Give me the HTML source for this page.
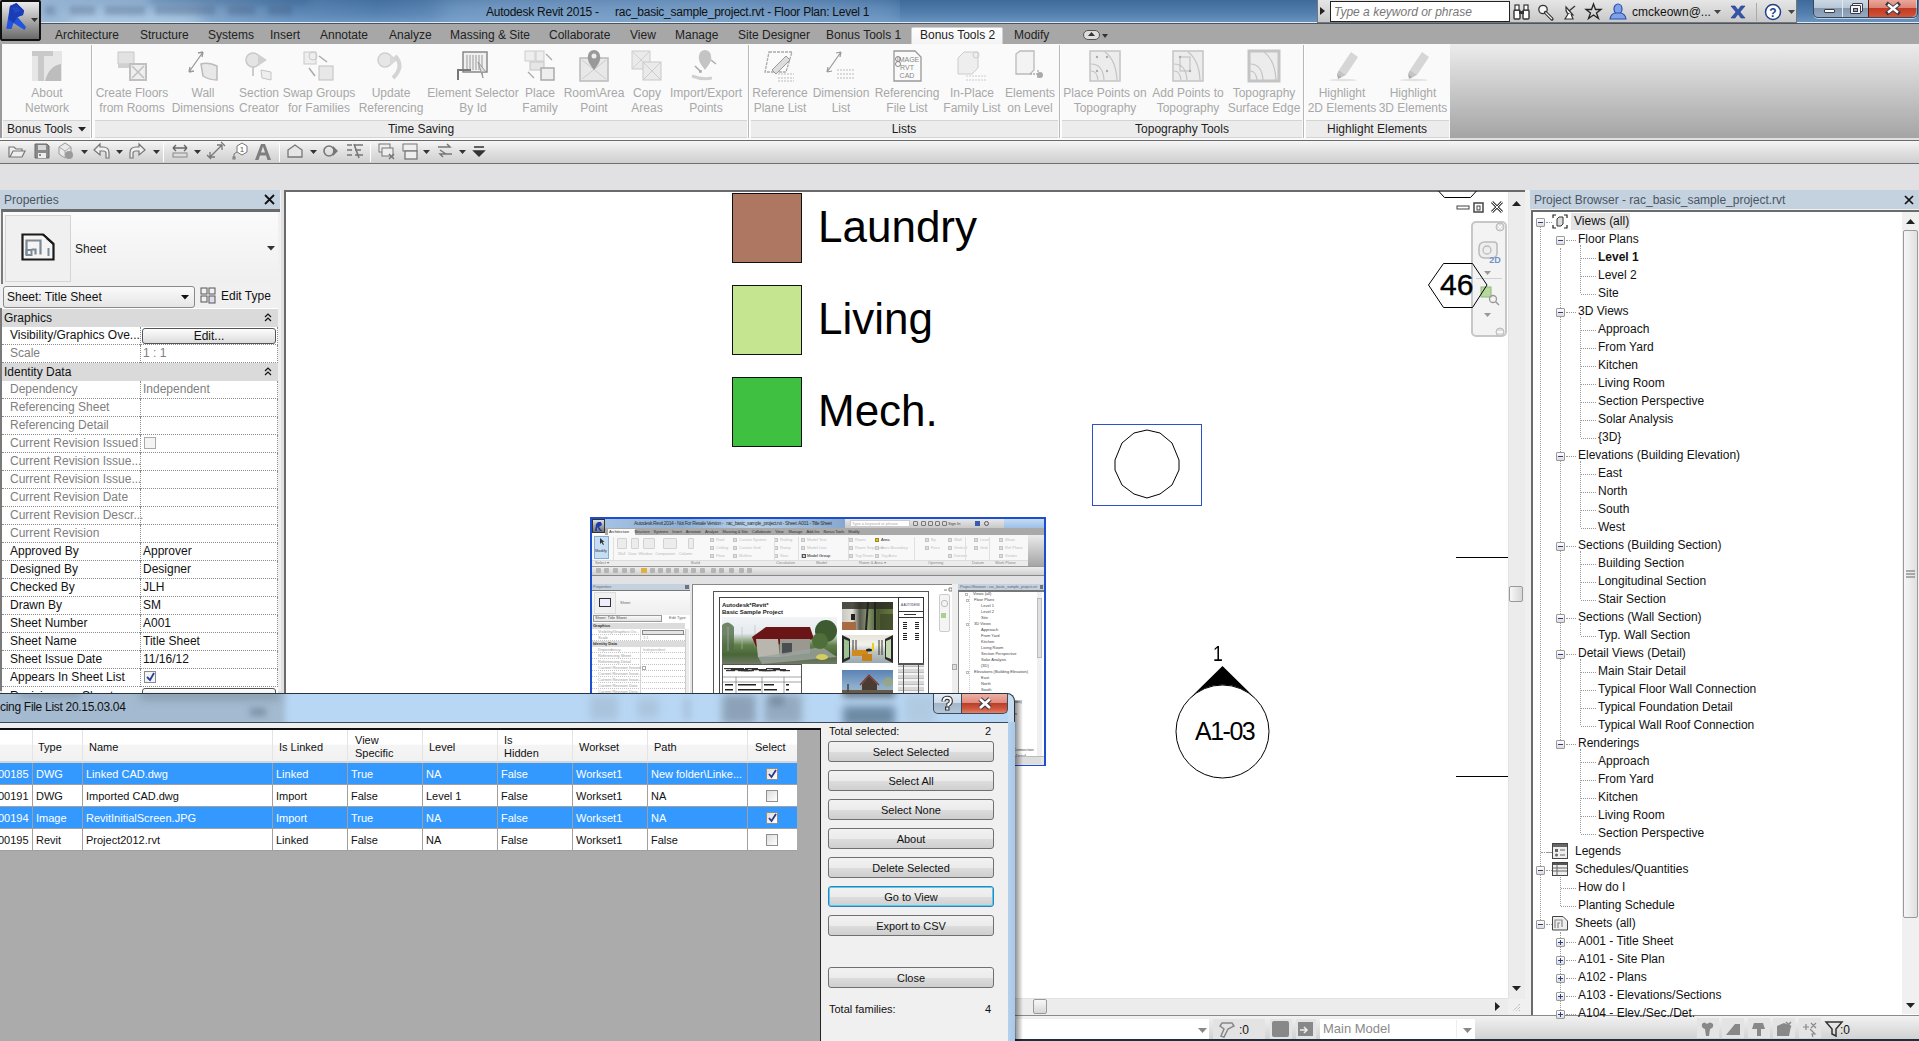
<!DOCTYPE html><html><head><meta charset="utf-8"><style>
*{margin:0;padding:0;box-sizing:border-box}
html,body{width:1919px;height:1041px;overflow:hidden;background:#e1e1e3;font-family:"Liberation Sans",sans-serif;font-size:12px;color:#000}
.a{position:absolute}
.t{position:absolute;white-space:nowrap;line-height:14px}
svg{position:absolute;overflow:visible}
</style></head><body><div class="a" style="left:0px;top:0px;width:1919px;height:23px;background:linear-gradient(#3f6a9b,#5380b0 60%,#6d96c0)"></div>
<div class="a" style="left:0px;top:0px;width:900px;height:23px;background:linear-gradient(90deg,rgba(170,195,222,0.85) 0%,rgba(160,190,220,0.75) 18%,rgba(120,160,200,0.35) 32%,rgba(110,150,195,0.1) 42%,rgba(140,175,210,0.35) 55%,rgba(140,175,210,0.4) 80%,rgba(110,150,195,0) 100%)"></div>
<div class="a" style="left:0;top:0;width:900px;height:22px;overflow:hidden"><div class="a" style="left:70px;top:12px;width:130px;height:16px;background:rgba(200,225,245,0.55);filter:blur(8px)"></div><div class="a" style="left:45px;top:6px;width:10px;height:9px;background:rgba(60,80,110,0.28);filter:blur(2.5px)"></div><div class="a" style="left:70px;top:6px;width:25px;height:9px;background:rgba(60,80,110,0.28);filter:blur(2.5px)"></div><div class="a" style="left:105px;top:6px;width:40px;height:9px;background:rgba(60,80,110,0.28);filter:blur(2.5px)"></div><div class="a" style="left:155px;top:6px;width:60px;height:9px;background:rgba(60,80,110,0.28);filter:blur(2.5px)"></div><div class="a" style="left:228px;top:6px;width:27px;height:9px;background:rgba(60,80,110,0.28);filter:blur(2.5px)"></div><div class="a" style="left:268px;top:6px;width:24px;height:9px;background:rgba(60,80,110,0.28);filter:blur(2.5px)"></div><div class="a" style="left:150px;top:-6px;width:160px;height:10px;background:rgba(40,80,130,0.35);filter:blur(5px)"></div><div class="a" style="left:440px;top:2px;width:460px;height:20px;background:rgba(160,195,228,0.35);filter:blur(10px)"></div></div>
<div class="a" style="left:0px;top:22px;width:1919px;height:1px;background:#dfe9f3"></div>
<div class="a" style="left:0px;top:0px;width:41px;height:41px;background:linear-gradient(#ececec,#6a6a6a);border:2px solid #111;border-radius:2px"></div>
<svg style="left:0px;top:0px;" width="40" height="40" viewBox="0 0 40 40"><path d="M10 6 L16.4 3 L24 10.5 L23 15 L17.5 17 L26 27 L24.5 30 L13.5 23 L11.5 29 L6.3 28.7 Z" fill="#2152e0"/><path d="M10 6 L16.4 3 L24 10.5 L23 15 L17.5 17 L13.5 23 L8.5 19 Z" fill="#1a3db5"/><path d="M12 8 L17 7 L21 11 L15 13Z" fill="#2a4fc8" opacity="0.7"/></svg>
<svg style="left:31px;top:18px;" width="7" height="4" viewBox="0 0 7 4"><path d="M0 0 L7 0 L3.5 4 Z" fill="#333"/></svg>
<div class="t" style="left:486px;top:5px;font-size:12px;letter-spacing:-0.25px;color:#111">Autodesk Revit 2015 -</div>
<div class="t" style="left:615px;top:5px;font-size:12px;letter-spacing:-0.25px;color:#111">rac_basic_sample_project.rvt - Floor Plan: Level 1</div>
<div class="a" style="left:1317px;top:0px;width:480px;height:23px;background:linear-gradient(#e6e6e6,#c8c8c8);border:1px solid #777;border-top:none"></div>
<svg style="left:1320px;top:7px;" width="6" height="8" viewBox="0 0 6 8"><path d="M0 0 L5 4 L0 8Z" fill="#222"/></svg>
<div class="a" style="left:1330px;top:1px;width:180px;height:21px;background:#fff;border:1px solid #222"></div>
<div class="t" style="left:1334px;top:5px;font-style:italic;color:#777;font-size:12px">Type a keyword or phrase</div>
<svg style="left:1513px;top:4px;" width="17" height="16" viewBox="0 0 17 16"><rect x="1" y="6" width="6" height="9" rx="1" fill="#fff" stroke="#333" stroke-width="1.4"/><rect x="10" y="6" width="6" height="9" rx="1" fill="#fff" stroke="#333" stroke-width="1.4"/><rect x="2" y="1" width="4" height="5" fill="#fff" stroke="#333" stroke-width="1.2"/><rect x="11" y="1" width="4" height="5" fill="#fff" stroke="#333" stroke-width="1.2"/><rect x="6" y="7" width="5" height="3" fill="#333"/></svg>
<svg style="left:1537px;top:4px;" width="17" height="16" viewBox="0 0 17 16"><circle cx="6" cy="5.5" r="4.2" fill="#f4f4f4" stroke="#333" stroke-width="1.3"/><path d="M8.5 8.5 L15 15" stroke="#333" stroke-width="3.2" stroke-linecap="round"/><path d="M8.5 8.5 L15 15" stroke="#eee" stroke-width="1.2"/></svg>
<svg style="left:1562px;top:4px;" width="16" height="16" viewBox="0 0 16 16"><path d="M4 3 Q3 11 11 11 Z" fill="#fff" stroke="#333" stroke-width="1.2"/><path d="M7 7 L13 2" stroke="#333" stroke-width="1.3"/><path d="M6 10 L3 15 H11 L9 10" fill="#fff" stroke="#333" stroke-width="1.2"/></svg>
<svg style="left:1585px;top:3px;" width="17" height="17" viewBox="0 0 17 17"><path d="M8.5 1 L10.5 6.5 L16 6.5 L11.5 10 L13.5 15.5 L8.5 12 L3.5 15.5 L5.5 10 L1 6.5 L6.5 6.5 Z" fill="none" stroke="#222" stroke-width="1.3"/></svg>
<svg style="left:1609px;top:3px;" width="18" height="17" viewBox="0 0 18 17"><ellipse cx="9" cy="6" rx="4" ry="5" fill="#7fa3e8" stroke="#2a4fb0" stroke-width="1.2"/><path d="M1 16 Q2 10 7 10 H11 Q16 10 17 16 Z" fill="#7fa3e8" stroke="#2a4fb0" stroke-width="1.2"/></svg>
<div class="t" style="left:1632px;top:5px;font-size:12px;color:#111">cmckeown@...</div>
<svg style="left:1714px;top:10px;" width="8" height="4" viewBox="0 0 8 4"><path d="M0 0 L7 0 L3.5 4Z" fill="#444"/></svg>
<svg style="left:1730px;top:5px;" width="16" height="14" viewBox="0 0 16 14"><path d="M1 1 H5 L8 5 L11 1 H15 L10 7 L15 13 H11 L8 9 L5 13 H1 L6 7Z" fill="#3355aa" stroke="#1e3a80" stroke-width="0.6"/></svg>
<div class="a" style="left:1756px;top:3px;width:1px;height:18px;background:#aaa"></div>
<svg style="left:1764px;top:3px;" width="18" height="18" viewBox="0 0 18 18"><circle cx="9" cy="9" r="7.5" fill="#fff" stroke="#1f3f8a" stroke-width="1.5"/><text x="9" y="13.5" font-size="12" font-weight="bold" text-anchor="middle" fill="#1f3f8a" font-family="Liberation Sans">?</text></svg>
<svg style="left:1788px;top:10px;" width="8" height="4" viewBox="0 0 8 4"><path d="M0 0 L7 0 L3.5 4Z" fill="#444"/></svg>
<div class="a" style="left:1813px;top:0px;width:105px;height:18px;border:1px solid #3a4658;border-top:none;border-radius:0 0 5px 5px;background:linear-gradient(#cdd8e4 0%,#b9c7d6 45%,#8397ae 50%,#95aac0 100%);box-shadow:0 1px 0 rgba(255,255,255,0.6)"></div>
<div class="a" style="left:1842px;top:0px;width:1px;height:17px;background:#3a4658;border-right:1px solid #e0e8f0"></div>
<div class="a" style="left:1868px;top:0px;width:48px;height:17px;background:linear-gradient(#eba79a 0%,#d98576 45%,#c33a20 50%,#d0553a 100%);border-left:1px solid #5a1a10;border-radius:0 0 5px 0"></div>
<div class="a" style="left:1824px;top:9px;width:11px;height:4px;background:#fff;border:1px solid #3a3a48;border-radius:1px"></div>
<div class="a" style="left:1852px;top:3px;width:11px;height:9px;border:1px solid #3a3a48;background:#f4f4f4;border-radius:1px"></div>
<div class="a" style="left:1850px;top:5px;width:11px;height:9px;border:1px solid #3a3a48;background:#f4f4f4;border-radius:1px"></div>
<div class="a" style="left:1853px;top:8px;width:5px;height:4px;border:1px solid #3a3a48;background:#8aa"></div>
<svg style="left:1886px;top:3px;" width="14" height="11" viewBox="0 0 14 11"><path d="M2 1.5 L12 9.5 M12 1.5 L2 9.5" stroke="#3a3a48" stroke-width="4.2" stroke-linecap="square"/><path d="M2 1.5 L12 9.5 M12 1.5 L2 9.5" stroke="#fff" stroke-width="2.4"/></svg>
<div class="a" style="left:41px;top:23px;width:1878px;height:21px;background:#a7a7a7;border-top:1px solid #4a5564"></div>
<div class="a" style="left:0px;top:41px;width:41px;height:3px;background:#a7a7a7"></div>
<div class="a" style="left:911px;top:27px;width:92px;height:17px;background:linear-gradient(#fff,#f3f3f3);border:1px solid #d0d0d0;border-bottom:none;border-radius:2px 2px 0 0"></div>
<div class="t" style="left:55px;top:28px;font-size:12px;color:#222">Architecture</div>
<div class="t" style="left:140px;top:28px;font-size:12px;color:#222">Structure</div>
<div class="t" style="left:208px;top:28px;font-size:12px;color:#222">Systems</div>
<div class="t" style="left:270px;top:28px;font-size:12px;color:#222">Insert</div>
<div class="t" style="left:320px;top:28px;font-size:12px;color:#222">Annotate</div>
<div class="t" style="left:389px;top:28px;font-size:12px;color:#222">Analyze</div>
<div class="t" style="left:450px;top:28px;font-size:12px;color:#222">Massing &amp; Site</div>
<div class="t" style="left:549px;top:28px;font-size:12px;color:#222">Collaborate</div>
<div class="t" style="left:630px;top:28px;font-size:12px;color:#222">View</div>
<div class="t" style="left:675px;top:28px;font-size:12px;color:#222">Manage</div>
<div class="t" style="left:738px;top:28px;font-size:12px;color:#222">Site Designer</div>
<div class="t" style="left:826px;top:28px;font-size:12px;color:#222">Bonus Tools 1</div>
<div class="t" style="left:1014px;top:28px;font-size:12px;color:#222">Modify</div>
<div class="t" style="left:920px;top:28px;font-size:12px;color:#222">Bonus Tools 2</div>
<div class="a" style="left:1083px;top:30px;width:17px;height:10px;border:1px solid #555;border-radius:5px;background:#ddd"></div>
<svg style="left:1088px;top:32px;" width="7" height="5" viewBox="0 0 7 5"><path d="M0 4 L3.5 0 L7 4Z" fill="#333"/></svg>
<svg style="left:1102px;top:34px;" width="6" height="4" viewBox="0 0 6 4"><path d="M0 0 L6 0 L3 4Z" fill="#333"/></svg>
<div class="a" style="left:0px;top:44px;width:1450px;height:94px;background:#fafafa"></div>
<div class="a" style="left:1450px;top:44px;width:469px;height:94px;background:linear-gradient(#ececec,#a4a4a4)"></div>
<div class="a" style="left:0px;top:44px;width:2px;height:94px;background:#9a9a9a"></div>
<div class="a" style="left:3px;top:120px;width:87px;height:18px;background:#ececec;border-top:1px solid #d4d4d4;border-bottom:1px solid #d4d4d4"></div>
<div class="a" style="left:95px;top:120px;width:652px;height:18px;background:#ececec;border-top:1px solid #d4d4d4;border-bottom:1px solid #d4d4d4"></div>
<div class="t" style="left:271px;top:122px;width:300px;text-align:center;color:#1c1c1c;font-size:12px">Time Saving</div>
<div class="a" style="left:751px;top:120px;width:307px;height:18px;background:#ececec;border-top:1px solid #d4d4d4;border-bottom:1px solid #d4d4d4"></div>
<div class="t" style="left:754px;top:122px;width:300px;text-align:center;color:#1c1c1c;font-size:12px">Lists</div>
<div class="a" style="left:1062px;top:120px;width:240px;height:18px;background:#ececec;border-top:1px solid #d4d4d4;border-bottom:1px solid #d4d4d4"></div>
<div class="t" style="left:1032px;top:122px;width:300px;text-align:center;color:#1c1c1c;font-size:12px">Topography Tools</div>
<div class="a" style="left:1306px;top:120px;width:143px;height:18px;background:#ececec;border-top:1px solid #d4d4d4;border-bottom:1px solid #d4d4d4"></div>
<div class="t" style="left:1227px;top:122px;width:300px;text-align:center;color:#1c1c1c;font-size:12px">Highlight Elements</div>
<div class="t" style="left:7px;top:122px;color:#1c1c1c;font-size:12px">Bonus Tools</div>
<svg style="left:78px;top:127px;" width="9" height="5" viewBox="0 0 9 5"><path d="M0 0 L8 0 L4 4.5Z" fill="#222"/></svg>
<div class="a" style="left:91px;top:45px;width:2px;height:93px;background:#b8b8b8;border-right:1px solid #fff"></div>
<div class="a" style="left:748px;top:45px;width:2px;height:93px;background:#b8b8b8;border-right:1px solid #fff"></div>
<div class="a" style="left:1059px;top:45px;width:2px;height:93px;background:#b8b8b8;border-right:1px solid #fff"></div>
<div class="a" style="left:1303px;top:45px;width:2px;height:93px;background:#b8b8b8;border-right:1px solid #fff"></div>
<div class="t" style="left:-13px;top:86px;width:120px;text-align:center;color:#a8a8a8;font-size:12px">About</div>
<div class="t" style="left:-13px;top:101px;width:120px;text-align:center;color:#a8a8a8;font-size:12px">Network</div>
<div class="t" style="left:72px;top:86px;width:120px;text-align:center;color:#a8a8a8;font-size:12px">Create Floors</div>
<div class="t" style="left:72px;top:101px;width:120px;text-align:center;color:#a8a8a8;font-size:12px">from Rooms</div>
<div class="t" style="left:143px;top:86px;width:120px;text-align:center;color:#a8a8a8;font-size:12px">Wall</div>
<div class="t" style="left:143px;top:101px;width:120px;text-align:center;color:#a8a8a8;font-size:12px">Dimensions</div>
<div class="t" style="left:199px;top:86px;width:120px;text-align:center;color:#a8a8a8;font-size:12px">Section</div>
<div class="t" style="left:199px;top:101px;width:120px;text-align:center;color:#a8a8a8;font-size:12px">Creator</div>
<div class="t" style="left:259px;top:86px;width:120px;text-align:center;color:#a8a8a8;font-size:12px">Swap Groups</div>
<div class="t" style="left:259px;top:101px;width:120px;text-align:center;color:#a8a8a8;font-size:12px">for Families</div>
<div class="t" style="left:331px;top:86px;width:120px;text-align:center;color:#a8a8a8;font-size:12px">Update</div>
<div class="t" style="left:331px;top:101px;width:120px;text-align:center;color:#a8a8a8;font-size:12px">Referencing</div>
<div class="t" style="left:413px;top:86px;width:120px;text-align:center;color:#a8a8a8;font-size:12px">Element Selector</div>
<div class="t" style="left:413px;top:101px;width:120px;text-align:center;color:#a8a8a8;font-size:12px">By Id</div>
<div class="t" style="left:480px;top:86px;width:120px;text-align:center;color:#a8a8a8;font-size:12px">Place</div>
<div class="t" style="left:480px;top:101px;width:120px;text-align:center;color:#a8a8a8;font-size:12px">Family</div>
<div class="t" style="left:534px;top:86px;width:120px;text-align:center;color:#a8a8a8;font-size:12px">Room\Area</div>
<div class="t" style="left:534px;top:101px;width:120px;text-align:center;color:#a8a8a8;font-size:12px">Point</div>
<div class="t" style="left:587px;top:86px;width:120px;text-align:center;color:#a8a8a8;font-size:12px">Copy</div>
<div class="t" style="left:587px;top:101px;width:120px;text-align:center;color:#a8a8a8;font-size:12px">Areas</div>
<div class="t" style="left:646px;top:86px;width:120px;text-align:center;color:#a8a8a8;font-size:12px">Import/Export</div>
<div class="t" style="left:646px;top:101px;width:120px;text-align:center;color:#a8a8a8;font-size:12px">Points</div>
<div class="t" style="left:720px;top:86px;width:120px;text-align:center;color:#a8a8a8;font-size:12px">Reference</div>
<div class="t" style="left:720px;top:101px;width:120px;text-align:center;color:#a8a8a8;font-size:12px">Plane List</div>
<div class="t" style="left:781px;top:86px;width:120px;text-align:center;color:#a8a8a8;font-size:12px">Dimension</div>
<div class="t" style="left:781px;top:101px;width:120px;text-align:center;color:#a8a8a8;font-size:12px">List</div>
<div class="t" style="left:847px;top:86px;width:120px;text-align:center;color:#a8a8a8;font-size:12px">Referencing</div>
<div class="t" style="left:847px;top:101px;width:120px;text-align:center;color:#a8a8a8;font-size:12px">File List</div>
<div class="t" style="left:912px;top:86px;width:120px;text-align:center;color:#a8a8a8;font-size:12px">In-Place</div>
<div class="t" style="left:912px;top:101px;width:120px;text-align:center;color:#a8a8a8;font-size:12px">Family List</div>
<div class="t" style="left:970px;top:86px;width:120px;text-align:center;color:#a8a8a8;font-size:12px">Elements</div>
<div class="t" style="left:970px;top:101px;width:120px;text-align:center;color:#a8a8a8;font-size:12px">on Level</div>
<div class="t" style="left:1045px;top:86px;width:120px;text-align:center;color:#a8a8a8;font-size:12px">Place Points on</div>
<div class="t" style="left:1045px;top:101px;width:120px;text-align:center;color:#a8a8a8;font-size:12px">Topography</div>
<div class="t" style="left:1128px;top:86px;width:120px;text-align:center;color:#a8a8a8;font-size:12px">Add Points to</div>
<div class="t" style="left:1128px;top:101px;width:120px;text-align:center;color:#a8a8a8;font-size:12px">Topography</div>
<div class="t" style="left:1204px;top:86px;width:120px;text-align:center;color:#a8a8a8;font-size:12px">Topography</div>
<div class="t" style="left:1204px;top:101px;width:120px;text-align:center;color:#a8a8a8;font-size:12px">Surface Edge</div>
<div class="t" style="left:1282px;top:86px;width:120px;text-align:center;color:#a8a8a8;font-size:12px">Highlight</div>
<div class="t" style="left:1282px;top:101px;width:120px;text-align:center;color:#a8a8a8;font-size:12px">2D Elements</div>
<div class="t" style="left:1353px;top:86px;width:120px;text-align:center;color:#a8a8a8;font-size:12px">Highlight</div>
<div class="t" style="left:1353px;top:101px;width:120px;text-align:center;color:#a8a8a8;font-size:12px">3D Elements</div>
<svg style="left:31px;top:50px;" width="32" height="32" viewBox="0 0 32 32"><rect x="1" y="1" width="30" height="30" fill="#e6e6e6"/><path d="M1 1 H22 V6 H13 V31 H7 V6 H1Z" fill="#c9c9c9"/><path d="M14 31 Q18 16 30 14 V31Z" fill="#bdbdbd"/></svg>
<svg style="left:116px;top:50px;" width="32" height="32" viewBox="0 0 32 32"><path d="M2 2 H18 V14 H2Z" fill="#e2e2e2" stroke="#c8c8c8"/><path d="M2 14 H20 V18 H2Z" fill="#d0d0d0"/><rect x="14" y="14" width="16" height="16" fill="#eee" stroke="#c0c0c0" stroke-width="2"/><path d="M16 16 L28 28 M28 16 L16 28" stroke="#c0c0c0" stroke-width="1.5"/></svg>
<svg style="left:187px;top:50px;" width="32" height="32" viewBox="0 0 32 32"><path d="M2 22 L16 2 M2 22 L3 17 M2 22 L7 21 M16 2 L11 3 M16 2 L15 7" stroke="#999" stroke-width="1.3" fill="none"/><path d="M14 14 Q22 12 30 16 V30 Q22 30 16 26Z" fill="#e8e8e8" stroke="#bbb" stroke-width="1.5"/></svg>
<svg style="left:243px;top:50px;" width="32" height="32" viewBox="0 0 32 32"><circle cx="10" cy="10" r="7" fill="#e4e4e4" stroke="#c8c8c8" stroke-width="1.5"/><path d="M15 4 L24 10 L15 16Z" fill="#d0d0d0"/><path d="M10 17 V26" stroke="#ccc" stroke-width="2"/><path d="M18 20 L28 22 V30 L19 28Z" fill="#eee" stroke="#c4c4c4"/></svg>
<svg style="left:303px;top:50px;" width="32" height="32" viewBox="0 0 32 32"><rect x="1" y="2" width="12" height="12" fill="#eee" stroke="#c8c8c8"/><circle cx="10" cy="6" r="4" fill="none" stroke="#c8c8c8"/><rect x="16" y="16" width="14" height="14" fill="#e8e8e8" stroke="#c0c0c0"/><path d="M16 6 L24 12 M6 18 L12 26" stroke="#aaa" stroke-width="1.5"/></svg>
<svg style="left:375px;top:50px;" width="32" height="32" viewBox="0 0 32 32"><circle cx="10" cy="10" r="7" fill="#e6e6e6" stroke="#cfcfcf" stroke-width="1.5"/><path d="M15 4 L22 10 L15 16Z" fill="#d8d8d8"/><path d="M20 6 Q30 16 18 28" fill="none" stroke="#d4d4d4" stroke-width="4"/></svg>
<svg style="left:457px;top:50px;" width="32" height="32" viewBox="0 0 32 32"><rect x="6" y="2" width="24" height="20" fill="#f0f0f0" stroke="#888" stroke-width="1.5"/><path d="M10 5 V20 M13 5 V20 M16 5 V20 M19 5 V20 M22 5 V20 M25 5 V20" stroke="#999"/><path d="M1 30 V20 H14" stroke="#777" stroke-width="2" fill="none"/><path d="M21 12 L29 22 L25 22 L26 28Z" fill="#ddd" stroke="#999"/></svg>
<svg style="left:524px;top:50px;" width="32" height="32" viewBox="0 0 32 32"><rect x="1" y="1" width="10" height="10" fill="#eee" stroke="#ccc"/><rect x="12" y="1" width="8" height="10" fill="#eee" stroke="#ccc"/><rect x="6" y="12" width="14" height="8" fill="#e6e6e6" stroke="#c4c4c4"/><rect x="17" y="18" width="13" height="12" fill="#eee" stroke="#aaa" stroke-width="1.5"/><path d="M22 4 L28 10 M4 22 L10 28" stroke="#aaa" stroke-width="1.3"/></svg>
<svg style="left:578px;top:50px;" width="32" height="32" viewBox="0 0 32 32"><rect x="2" y="8" width="28" height="23" fill="#e8e8e8" stroke="#bbb" stroke-width="1.5"/><path d="M4 10 L28 29 M28 10 L4 29" stroke="#ccc"/><path d="M16 20 Q8 10 10 6 A6 6 0 1 1 22 6 Q24 10 16 20Z" fill="#999"/><circle cx="16" cy="6" r="2.5" fill="#eee"/></svg>
<svg style="left:631px;top:50px;" width="32" height="32" viewBox="0 0 32 32"><rect x="1" y="1" width="18" height="18" fill="#eaeaea" stroke="#ccc"/><path d="M1 1 L19 19 M19 1 L1 19" stroke="#d0d0d0"/><rect x="12" y="12" width="18" height="18" fill="#eaeaea" stroke="#c8c8c8"/><path d="M12 12 L30 30 M30 12 L12 30" stroke="#ccc"/></svg>
<svg style="left:690px;top:50px;" width="32" height="32" viewBox="0 0 32 32"><path d="M15 20 Q7 10 9 6 A6 6 0 1 1 21 6 Q23 10 15 20Z" fill="#c4c4c4"/><path d="M2 26 Q12 30 22 28" stroke="#d0d0d0" stroke-width="3" fill="none"/><path d="M5 16 L11 22 M9 22 H11 V20 M26 14 L21 10" stroke="#aaa" stroke-width="1.5" fill="none"/></svg>
<svg style="left:764px;top:50px;" width="32" height="32" viewBox="0 0 32 32"><path d="M5 2 H28 L22 22 H1Z" fill="none" stroke="#aaa" stroke-width="1.3" stroke-dasharray="3,1"/><path d="M8 20 L22 6 L26 10 L12 24Z" fill="#ddd" stroke="#999"/><path d="M14 24 H30 M14 28 H30 M14 31 H30" stroke="#bbb" stroke-dasharray="2,1"/></svg>
<svg style="left:825px;top:50px;" width="32" height="32" viewBox="0 0 32 32"><path d="M2 22 L16 2 M2 22 L3 17 M2 22 L7 21 M16 2 L11 3 M16 2 L15 7" stroke="#999" stroke-width="1.2" fill="none"/><path d="M12 20 H30 M12 24 H30 M12 28 H30" stroke="#bbb" stroke-dasharray="2,1"/></svg>
<svg style="left:891px;top:50px;" width="32" height="32" viewBox="0 0 32 32"><path d="M3 1 H24 L30 7 V31 H3Z" fill="#fafafa" stroke="#999" stroke-width="1.3"/><text x="17" y="12" font-size="7" text-anchor="middle" fill="#888" font-family="Liberation Sans">IMAGE</text><text x="16" y="20" font-size="7" text-anchor="middle" fill="#888" font-family="Liberation Sans">RVT</text><text x="16" y="28" font-size="7" text-anchor="middle" fill="#888" font-family="Liberation Sans">CAD</text><circle cx="7" cy="9" r="2.5" fill="none" stroke="#888"/><circle cx="7" cy="14" r="2.5" fill="none" stroke="#888"/></svg>
<svg style="left:956px;top:50px;" width="32" height="32" viewBox="0 0 32 32"><path d="M2 8 L8 2 H22 V18 L16 24 H2Z" fill="#eee" stroke="#ccc"/><circle cx="20" cy="5" r="3" fill="none" stroke="#ccc"/><path d="M10 26 H30 M10 30 H30" stroke="#ccc" stroke-dasharray="2,1"/></svg>
<svg style="left:1014px;top:50px;" width="32" height="32" viewBox="0 0 32 32"><path d="M2 4 L6 1 H20 V20 L16 24 H2Z" fill="#f3f3f3" stroke="#bbb" stroke-width="1.3"/><path d="M16 24 H28 M24 20 V28" stroke="#aaa" stroke-width="1.3" stroke-dasharray="2,1"/><circle cx="26" cy="25" r="3" fill="#aaa"/></svg>
<svg style="left:1089px;top:50px;" width="32" height="32" viewBox="0 0 32 32"><rect x="1" y="1" width="30" height="30" fill="#ececec" stroke="#c4c4c4" stroke-width="1.5"/><path d="M2 14 Q14 14 15 30 M2 21 Q8 21 9 30 M16 2 Q27 10 28 30" fill="none" stroke="#c4c4c4" stroke-width="1.2"/><circle cx="8" cy="7" r="1.2" fill="#aaa"/><circle cx="18" cy="7" r="1.2" fill="#aaa"/><circle cx="8" cy="21" r="1.2" fill="#aaa"/><circle cx="18" cy="21" r="1.2" fill="#aaa"/></svg>
<svg style="left:1172px;top:50px;" width="32" height="32" viewBox="0 0 32 32"><rect x="1" y="1" width="30" height="30" fill="#ececec" stroke="#c4c4c4" stroke-width="1.5"/><path d="M2 14 Q14 14 15 30 M2 21 Q8 21 9 30 M16 2 Q27 10 28 30" fill="none" stroke="#c4c4c4" stroke-width="1.2"/><rect x="8" y="7" width="10" height="14" fill="none" stroke="#bbb" stroke-width="1"/><circle cx="8" cy="7" r="1.2" fill="#aaa"/><circle cx="18" cy="21" r="1.2" fill="#aaa"/></svg>
<svg style="left:1248px;top:50px;" width="32" height="32" viewBox="0 0 32 32"><rect x="1" y="1" width="30" height="30" fill="#ececec" stroke="#c4c4c4" stroke-width="3"/><path d="M2 14 Q14 14 15 30 M2 21 Q8 21 9 30 M16 2 Q27 10 28 30" fill="none" stroke="#c4c4c4" stroke-width="1.2"/></svg>
<svg style="left:1326px;top:50px;" width="32" height="32" viewBox="0 0 32 32"><path d="M13 20 L25 2 L32 7 L20 25Z" fill="#d6d6d6"/><path d="M13 20 L20 25 L16 27 L11 24Z" fill="#c4c4c4"/><path d="M11 24 L16 27 L12 29Z" fill="#aaa"/><ellipse cx="17" cy="30" rx="14" ry="1.2" fill="#e2e2e2"/></svg>
<svg style="left:1397px;top:50px;" width="32" height="32" viewBox="0 0 32 32"><path d="M13 20 L25 2 L32 7 L20 25Z" fill="#d6d6d6"/><path d="M13 20 L20 25 L16 27 L11 24Z" fill="#c4c4c4"/><path d="M11 24 L16 27 L12 29Z" fill="#aaa"/><ellipse cx="17" cy="30" rx="14" ry="1.2" fill="#e2e2e2"/></svg>
<div class="a" style="left:0px;top:138px;width:1450px;height:2px;background:#fafafa"></div>
<div class="a" style="left:0px;top:140px;width:1919px;height:1px;background:#6a6a6a"></div>
<div class="a" style="left:0px;top:141px;width:1919px;height:23px;background:linear-gradient(#f6f6f6,#e4e4e4 40%,#cfcfcf);border-bottom:1px solid #6f6f6f"></div>
<svg style="left:8px;top:142px;" width="18" height="18" viewBox="0 0 18 18"><path d="M1 5 H6 L8 7 H14 V9 H5 L2 15 H1Z M5 9 H17 L14 15 H2Z" fill="#eee" stroke="#777" stroke-width="1.2"/></svg>
<svg style="left:33px;top:142px;" width="18" height="18" viewBox="0 0 18 18"><path d="M2 2 H14 L16 4 V16 H2Z" fill="#8a8a8a" stroke="#6a6a6a"/><rect x="5" y="3" width="8" height="5" fill="#d8d8d8"/><rect x="5" y="11" width="8" height="5" fill="#eee"/><rect x="6" y="12" width="2" height="2" fill="#888"/></svg>
<svg style="left:57px;top:142px;" width="18" height="18" viewBox="0 0 18 18"><path d="M2 5 L8 1 L14 5 V12 L8 16 L2 12Z" fill="#eaeaea" stroke="#999"/><path d="M2 5 L8 9 L14 5 M8 9 V16" fill="none" stroke="#aaa"/><circle cx="12" cy="13" r="4" fill="#9a9a9a"/></svg>
<svg style="left:81px;top:150px;" width="7" height="4" viewBox="0 0 7 4"><path d="M0 0 L7 0 L3.5 4Z" fill="#333"/></svg>
<svg style="left:116px;top:150px;" width="7" height="4" viewBox="0 0 7 4"><path d="M0 0 L7 0 L3.5 4Z" fill="#333"/></svg>
<svg style="left:153px;top:150px;" width="7" height="4" viewBox="0 0 7 4"><path d="M0 0 L7 0 L3.5 4Z" fill="#333"/></svg>
<svg style="left:194px;top:150px;" width="7" height="4" viewBox="0 0 7 4"><path d="M0 0 L7 0 L3.5 4Z" fill="#333"/></svg>
<svg style="left:310px;top:150px;" width="7" height="4" viewBox="0 0 7 4"><path d="M0 0 L7 0 L3.5 4Z" fill="#333"/></svg>
<svg style="left:423px;top:150px;" width="7" height="4" viewBox="0 0 7 4"><path d="M0 0 L7 0 L3.5 4Z" fill="#333"/></svg>
<svg style="left:459px;top:150px;" width="7" height="4" viewBox="0 0 7 4"><path d="M0 0 L7 0 L3.5 4Z" fill="#333"/></svg>
<svg style="left:93px;top:142px;" width="18" height="18" viewBox="0 0 18 18"><path d="M1 8 L7 2 V5 H10 Q16 5 16 11 V16 H13 V11 Q13 9 10 9 H7 V13Z" fill="#f0f0f0" stroke="#777" stroke-width="1.2"/></svg>
<svg style="left:128px;top:142px;" width="18" height="18" viewBox="0 0 18 18"><path d="M17 8 L11 2 V5 H8 Q2 5 2 11 V16 H5 V11 Q5 9 8 9 H11 V13Z" fill="#f0f0f0" stroke="#777" stroke-width="1.2"/></svg>
<div class="a" style="left:163px;top:143px;width:1px;height:19px;background:#aaa;border-right:1px solid #fff"></div>
<svg style="left:171px;top:142px;" width="18" height="18" viewBox="0 0 18 18"><path d="M2 6 H16 M2 6 L5 3 M2 6 L5 9 M16 6 L13 3 M16 6 L13 9" stroke="#666" stroke-width="1.4" fill="none"/><rect x="2" y="11" width="14" height="4" fill="#ddd" stroke="#888"/></svg>
<svg style="left:207px;top:142px;" width="18" height="18" viewBox="0 0 18 18"><path d="M3 15 L15 3 M3 15 V10 M3 15 H8 M15 3 H10 M15 3 V8 M0 13 L4 17 M14 0 L18 4" stroke="#777" stroke-width="1.3" fill="none"/></svg>
<svg style="left:231px;top:142px;" width="18" height="18" viewBox="0 0 18 18"><path d="M11 1 L16 4 V10 L11 13 L6 10 V4Z" fill="#fff" stroke="#777"/><text x="11" y="10" font-size="8" text-anchor="middle" fill="#555" font-family="Liberation Sans">1</text><path d="M6 10 L3 12 V16" stroke="#777" fill="none"/><rect x="2" y="15" width="2" height="2" fill="none" stroke="#777"/></svg>
<svg style="left:254px;top:143px;" width="18" height="18" viewBox="0 0 18 18"><path d="M1 17 L7 1 H11 L17 17 H13.5 L12 12.5 H6 L4.5 17Z M7 9.5 H11 L9 3.5Z" fill="#7e7e7e" fill-rule="evenodd"/></svg>
<div class="a" style="left:279px;top:143px;width:1px;height:19px;background:#aaa;border-right:1px solid #fff"></div>
<svg style="left:286px;top:142px;" width="18" height="18" viewBox="0 0 18 18"><path d="M2 8 L9 3 L16 8 V15 H2Z" fill="#e6e6e6" stroke="#777" stroke-width="1.3"/></svg>
<svg style="left:321px;top:142px;" width="18" height="18" viewBox="0 0 18 18"><circle cx="8" cy="9" r="5" fill="none" stroke="#777" stroke-width="1.6"/><path d="M12 4 L17 9 L12 14" fill="#777"/></svg>
<svg style="left:346px;top:142px;" width="18" height="18" viewBox="0 0 18 18"><path d="M1 3 H6 M1 8 H6 M1 13 H6 M9 3 H17 M9 8 H15 M9 13 H17 M8 2 L13 16" stroke="#777" stroke-width="1.6"/></svg>
<div class="a" style="left:370px;top:143px;width:1px;height:19px;background:#aaa;border-right:1px solid #fff"></div>
<svg style="left:377px;top:142px;" width="18" height="18" viewBox="0 0 18 18"><rect x="2" y="2" width="11" height="8" fill="#eee" stroke="#777"/><rect x="5" y="6" width="11" height="8" fill="#eee" stroke="#777"/><path d="M12 12 L17 17 M17 12 L12 17" stroke="#777" stroke-width="1.5"/></svg>
<svg style="left:401px;top:142px;" width="18" height="18" viewBox="0 0 18 18"><rect x="2" y="2" width="14" height="7" fill="#eee" stroke="#777"/><rect x="4" y="9" width="12" height="8" fill="#eee" stroke="#777" stroke-width="1.3"/></svg>
<svg style="left:436px;top:142px;" width="18" height="18" viewBox="0 0 18 18"><path d="M2 5 H14 L11 2 M16 12 H4 L7 15 M4 8 L10 12" stroke="#777" stroke-width="1.5" fill="none"/></svg>
<svg style="left:474px;top:147px;" width="10" height="9" viewBox="0 0 10 9"><path d="M0 0 H10 M0 4 L10 4 L5 9Z" fill="#333" stroke="#333" stroke-width="1.5"/></svg>
<div class="a" style="left:0px;top:190px;width:281px;height:501px;background:#f0f0f0"></div>
<div class="a" style="left:0px;top:190px;width:280px;height:19px;background:#c4d2df"></div>
<div class="t" style="left:4px;top:193px;color:#4b5563;font-size:12px">Properties</div>
<svg style="left:264px;top:194px;" width="11" height="11" viewBox="0 0 11 11"><path d="M1 1 L10 10 M10 1 L1 10" stroke="#111" stroke-width="1.8"/></svg>
<div class="a" style="left:1px;top:209px;width:279px;height:3px;background:#6b6b6b"></div>
<div class="a" style="left:1px;top:212px;width:277px;height:72px;background:linear-gradient(#fbfbfb,#efefef);border-left:2px solid #7a7a7a"></div>
<div class="a" style="left:5px;top:215px;width:66px;height:67px;background:#f0f0f0;border:1px solid #d4d4d4"></div>
<svg style="left:21px;top:233px;" width="34" height="28" viewBox="0 0 34 28"><path d="M1.5 1.5 H22 L32.5 11 V26.5 H1.5Z" fill="#f4f4f4" stroke="#1a1a1a" stroke-width="2.2"/><path d="M22 1.5 V6 H27Z" fill="#fff" stroke="none"/><path d="M22 1.5 L32.5 11" stroke="#1a1a1a" stroke-width="2.2"/><path d="M5.5 22 V7.5 H19.5 V21.5 M10.5 16.5 H14.5 V21.5" fill="none" stroke="#7d8a96" stroke-width="2.2"/><rect x="5.5" y="17" width="5" height="5" fill="none" stroke="#7d8a96" stroke-width="2"/><path d="M27.5 15 V23" stroke="#7d8a96" stroke-width="2"/></svg>
<div class="t" style="left:75px;top:242px;color:#222">Sheet</div>
<svg style="left:267px;top:246px;" width="8" height="5" viewBox="0 0 8 5"><path d="M0 0 H8 L4 4.5Z" fill="#333"/></svg>
<div class="a" style="left:3px;top:286px;width:192px;height:22px;background:linear-gradient(#fafafa,#e6e6e6);border:1px solid #8a8a8a;border-radius:3px"></div>
<div class="t" style="left:7px;top:290px;color:#111">Sheet: Title Sheet</div>
<svg style="left:181px;top:295px;" width="8" height="5" viewBox="0 0 8 5"><path d="M0 0 H8 L4 4.5Z" fill="#111"/></svg>
<svg style="left:200px;top:287px;" width="17" height="17" viewBox="0 0 17 17"><rect x="1" y="1" width="6" height="6" fill="none" stroke="#555"/><rect x="1" y="9" width="6" height="6" fill="none" stroke="#555"/><rect x="9" y="1" width="6" height="6" fill="none" stroke="#555"/><rect x="9" y="9" width="6" height="7" fill="#dde" stroke="#555"/></svg>
<div class="t" style="left:221px;top:289px;color:#111">Edit Type</div>
<div class="a" style="left:0px;top:308px;width:278px;height:383px;background:#fff;border-left:2px solid #7a7a7a"></div>
<div class="a" style="left:2px;top:309px;width:276px;height:18px;background:#dadada"></div>
<div class="t" style="left:4px;top:311px;color:#111">Graphics</div>
<svg style="left:264px;top:313px;" width="8" height="9" viewBox="0 0 8 9"><path d="M1 4 L4 1 L7 4 M1 8 L4 5 L7 8" fill="none" stroke="#111" stroke-width="1.2"/></svg>
<div class="a" style="left:2px;top:327px;width:276px;height:18px;background:#fff;border-bottom:1px dotted #8c8c8c"></div>
<div class="a" style="left:140px;top:327px;width:1px;height:18px;border-left:1px dotted #8c8c8c"></div>
<div class="a" style="left:277px;top:327px;width:1px;height:18px;border-left:1px dotted #8c8c8c"></div>
<div class="t" style="left:10px;top:328px;color:#111">Visibility/Graphics Ove...</div>
<div class="a" style="left:142px;top:328px;width:134px;height:16px;background:linear-gradient(#fdfdfd,#dcdcdc);border:1px solid #555;border-radius:3px"></div>
<div class="t" style="left:159px;top:329px;width:100px;text-align:center;color:#111">Edit...</div>
<div class="a" style="left:2px;top:345px;width:276px;height:18px;background:#fff;border-bottom:1px dotted #8c8c8c"></div>
<div class="a" style="left:140px;top:345px;width:1px;height:18px;border-left:1px dotted #8c8c8c"></div>
<div class="a" style="left:277px;top:345px;width:1px;height:18px;border-left:1px dotted #8c8c8c"></div>
<div class="t" style="left:10px;top:346px;color:#808080">Scale</div>
<div class="t" style="left:143px;top:346px;color:#808080">1 : 1</div>
<div class="a" style="left:2px;top:363px;width:276px;height:18px;background:#dadada"></div>
<div class="t" style="left:4px;top:365px;color:#111">Identity Data</div>
<svg style="left:264px;top:367px;" width="8" height="9" viewBox="0 0 8 9"><path d="M1 4 L4 1 L7 4 M1 8 L4 5 L7 8" fill="none" stroke="#111" stroke-width="1.2"/></svg>
<div class="a" style="left:2px;top:381px;width:276px;height:18px;background:#fff;border-bottom:1px dotted #8c8c8c"></div>
<div class="a" style="left:140px;top:381px;width:1px;height:18px;border-left:1px dotted #8c8c8c"></div>
<div class="a" style="left:277px;top:381px;width:1px;height:18px;border-left:1px dotted #8c8c8c"></div>
<div class="t" style="left:10px;top:382px;color:#808080">Dependency</div>
<div class="t" style="left:143px;top:382px;color:#808080">Independent</div>
<div class="a" style="left:2px;top:399px;width:276px;height:18px;background:#fff;border-bottom:1px dotted #8c8c8c"></div>
<div class="a" style="left:140px;top:399px;width:1px;height:18px;border-left:1px dotted #8c8c8c"></div>
<div class="a" style="left:277px;top:399px;width:1px;height:18px;border-left:1px dotted #8c8c8c"></div>
<div class="t" style="left:10px;top:400px;color:#808080">Referencing Sheet</div>
<div class="a" style="left:2px;top:417px;width:276px;height:18px;background:#fff;border-bottom:1px dotted #8c8c8c"></div>
<div class="a" style="left:140px;top:417px;width:1px;height:18px;border-left:1px dotted #8c8c8c"></div>
<div class="a" style="left:277px;top:417px;width:1px;height:18px;border-left:1px dotted #8c8c8c"></div>
<div class="t" style="left:10px;top:418px;color:#808080">Referencing Detail</div>
<div class="a" style="left:2px;top:435px;width:276px;height:18px;background:#fff;border-bottom:1px dotted #8c8c8c"></div>
<div class="a" style="left:140px;top:435px;width:1px;height:18px;border-left:1px dotted #8c8c8c"></div>
<div class="a" style="left:277px;top:435px;width:1px;height:18px;border-left:1px dotted #8c8c8c"></div>
<div class="t" style="left:10px;top:436px;color:#808080">Current Revision Issued</div>
<div class="a" style="left:2px;top:453px;width:276px;height:18px;background:#fff;border-bottom:1px dotted #8c8c8c"></div>
<div class="a" style="left:140px;top:453px;width:1px;height:18px;border-left:1px dotted #8c8c8c"></div>
<div class="a" style="left:277px;top:453px;width:1px;height:18px;border-left:1px dotted #8c8c8c"></div>
<div class="t" style="left:10px;top:454px;color:#808080">Current Revision Issue...</div>
<div class="a" style="left:2px;top:471px;width:276px;height:18px;background:#fff;border-bottom:1px dotted #8c8c8c"></div>
<div class="a" style="left:140px;top:471px;width:1px;height:18px;border-left:1px dotted #8c8c8c"></div>
<div class="a" style="left:277px;top:471px;width:1px;height:18px;border-left:1px dotted #8c8c8c"></div>
<div class="t" style="left:10px;top:472px;color:#808080">Current Revision Issue...</div>
<div class="a" style="left:2px;top:489px;width:276px;height:18px;background:#fff;border-bottom:1px dotted #8c8c8c"></div>
<div class="a" style="left:140px;top:489px;width:1px;height:18px;border-left:1px dotted #8c8c8c"></div>
<div class="a" style="left:277px;top:489px;width:1px;height:18px;border-left:1px dotted #8c8c8c"></div>
<div class="t" style="left:10px;top:490px;color:#808080">Current Revision Date</div>
<div class="a" style="left:2px;top:507px;width:276px;height:18px;background:#fff;border-bottom:1px dotted #8c8c8c"></div>
<div class="a" style="left:140px;top:507px;width:1px;height:18px;border-left:1px dotted #8c8c8c"></div>
<div class="a" style="left:277px;top:507px;width:1px;height:18px;border-left:1px dotted #8c8c8c"></div>
<div class="t" style="left:10px;top:508px;color:#808080">Current Revision Descr...</div>
<div class="a" style="left:2px;top:525px;width:276px;height:18px;background:#fff;border-bottom:1px dotted #8c8c8c"></div>
<div class="a" style="left:140px;top:525px;width:1px;height:18px;border-left:1px dotted #8c8c8c"></div>
<div class="a" style="left:277px;top:525px;width:1px;height:18px;border-left:1px dotted #8c8c8c"></div>
<div class="t" style="left:10px;top:526px;color:#808080">Current Revision</div>
<div class="a" style="left:2px;top:543px;width:276px;height:18px;background:#fff;border-bottom:1px dotted #8c8c8c"></div>
<div class="a" style="left:140px;top:543px;width:1px;height:18px;border-left:1px dotted #8c8c8c"></div>
<div class="a" style="left:277px;top:543px;width:1px;height:18px;border-left:1px dotted #8c8c8c"></div>
<div class="t" style="left:10px;top:544px;color:#111">Approved By</div>
<div class="t" style="left:143px;top:544px;color:#111">Approver</div>
<div class="a" style="left:2px;top:561px;width:276px;height:18px;background:#fff;border-bottom:1px dotted #8c8c8c"></div>
<div class="a" style="left:140px;top:561px;width:1px;height:18px;border-left:1px dotted #8c8c8c"></div>
<div class="a" style="left:277px;top:561px;width:1px;height:18px;border-left:1px dotted #8c8c8c"></div>
<div class="t" style="left:10px;top:562px;color:#111">Designed By</div>
<div class="t" style="left:143px;top:562px;color:#111">Designer</div>
<div class="a" style="left:2px;top:579px;width:276px;height:18px;background:#fff;border-bottom:1px dotted #8c8c8c"></div>
<div class="a" style="left:140px;top:579px;width:1px;height:18px;border-left:1px dotted #8c8c8c"></div>
<div class="a" style="left:277px;top:579px;width:1px;height:18px;border-left:1px dotted #8c8c8c"></div>
<div class="t" style="left:10px;top:580px;color:#111">Checked By</div>
<div class="t" style="left:143px;top:580px;color:#111">JLH</div>
<div class="a" style="left:2px;top:597px;width:276px;height:18px;background:#fff;border-bottom:1px dotted #8c8c8c"></div>
<div class="a" style="left:140px;top:597px;width:1px;height:18px;border-left:1px dotted #8c8c8c"></div>
<div class="a" style="left:277px;top:597px;width:1px;height:18px;border-left:1px dotted #8c8c8c"></div>
<div class="t" style="left:10px;top:598px;color:#111">Drawn By</div>
<div class="t" style="left:143px;top:598px;color:#111">SM</div>
<div class="a" style="left:2px;top:615px;width:276px;height:18px;background:#fff;border-bottom:1px dotted #8c8c8c"></div>
<div class="a" style="left:140px;top:615px;width:1px;height:18px;border-left:1px dotted #8c8c8c"></div>
<div class="a" style="left:277px;top:615px;width:1px;height:18px;border-left:1px dotted #8c8c8c"></div>
<div class="t" style="left:10px;top:616px;color:#111">Sheet Number</div>
<div class="t" style="left:143px;top:616px;color:#111">A001</div>
<div class="a" style="left:2px;top:633px;width:276px;height:18px;background:#fff;border-bottom:1px dotted #8c8c8c"></div>
<div class="a" style="left:140px;top:633px;width:1px;height:18px;border-left:1px dotted #8c8c8c"></div>
<div class="a" style="left:277px;top:633px;width:1px;height:18px;border-left:1px dotted #8c8c8c"></div>
<div class="t" style="left:10px;top:634px;color:#111">Sheet Name</div>
<div class="t" style="left:143px;top:634px;color:#111">Title Sheet</div>
<div class="a" style="left:2px;top:651px;width:276px;height:18px;background:#fff;border-bottom:1px dotted #8c8c8c"></div>
<div class="a" style="left:140px;top:651px;width:1px;height:18px;border-left:1px dotted #8c8c8c"></div>
<div class="a" style="left:277px;top:651px;width:1px;height:18px;border-left:1px dotted #8c8c8c"></div>
<div class="t" style="left:10px;top:652px;color:#111">Sheet Issue Date</div>
<div class="t" style="left:143px;top:652px;color:#111">11/16/12</div>
<div class="a" style="left:2px;top:669px;width:276px;height:18px;background:#fff;border-bottom:1px dotted #8c8c8c"></div>
<div class="a" style="left:140px;top:669px;width:1px;height:18px;border-left:1px dotted #8c8c8c"></div>
<div class="a" style="left:277px;top:669px;width:1px;height:18px;border-left:1px dotted #8c8c8c"></div>
<div class="t" style="left:10px;top:670px;color:#111">Appears In Sheet List</div>
<div class="a" style="left:144px;top:437px;width:12px;height:12px;background:#f4f4f4;border:1px solid #aaa"></div>
<div class="a" style="left:144px;top:671px;width:12px;height:12px;background:#f4f4f4;border:1px solid #8a8a8a"></div>
<svg style="left:146px;top:672px;" width="9" height="10" viewBox="0 0 9 10"><path d="M1 5 L4 8 L8 1" fill="none" stroke="#2b3f9c" stroke-width="1.8"/></svg>
<div class="a" style="left:2px;top:687px;width:276px;height:6px;background:#fff;overflow:hidden"></div>
<div class="a" style="left:2px;top:687px;width:276px;height:6px;overflow:hidden"><div class="t" style="left:8px;top:2px;color:#111">Revisions on Sheet</div><div class="a" style="left:140px;top:1px;width:134px;height:16px;background:linear-gradient(#fdfdfd,#dcdcdc);border:1px solid #555;border-radius:3px"></div></div>
<div class="a" style="left:284px;top:190px;width:1242px;height:826px;background:#f0f0f0"></div>
<div class="a" style="left:284px;top:190px;width:1225px;height:809px;background:#fff;border-top:2px solid #6b6b6b;border-left:2px solid #6b6b6b"></div>
<div class="a" style="left:1508px;top:190px;width:17px;height:2px;background:#6b6b6b"></div>
<div class="a" style="left:1508px;top:192px;width:17px;height:807px;background:#ececec;border-left:1px solid #e2e2e2"></div>
<svg style="left:1512px;top:201px;" width="9" height="5" viewBox="0 0 9 5"><path d="M0 5 L4.5 0 L9 5Z" fill="#222"/></svg>
<svg style="left:1512px;top:986px;" width="9" height="5" viewBox="0 0 9 5"><path d="M0 0 L9 0 L4.5 5Z" fill="#222"/></svg>
<div class="a" style="left:1509px;top:586px;width:14px;height:16px;background:linear-gradient(90deg,#f8f8f8,#d6d6d6);border:1px solid #999;border-radius:2px"></div>
<div class="a" style="left:286px;top:998px;width:1222px;height:17px;background:#ececec;border-top:1px solid #e2e2e2"></div>
<div class="a" style="left:1033px;top:999px;width:14px;height:15px;background:linear-gradient(#f8f8f8,#d6d6d6);border:1px solid #999;border-radius:2px"></div>
<svg style="left:1495px;top:1002px;" width="5" height="9" viewBox="0 0 5 9"><path d="M0 0 L5 4.5 L0 9Z" fill="#222"/></svg>
<svg style="left:1512px;top:1003px;" width="9" height="9" viewBox="0 0 9 9"><path d="M8 1 L1 8 M8 4 L4 8 M8 7 L7 8" stroke="#aaa" stroke-dasharray="1,1"/></svg>
<div class="a" style="left:1525px;top:190px;width:5px;height:826px;background:#f0f0f0"></div>
<div class="a" style="left:732px;top:193px;width:70px;height:70px;background:#ad7762;border:1px solid #111"></div>
<div class="t" style="left:818px;top:201px;font-size:44px;line-height:52px;color:#000">Laundry</div>
<div class="a" style="left:732px;top:285px;width:70px;height:70px;background:#c6e590;border:1px solid #111"></div>
<div class="t" style="left:818px;top:293px;font-size:44px;line-height:52px;color:#000">Living</div>
<div class="a" style="left:732px;top:377px;width:70px;height:70px;background:#40c040;border:1px solid #111"></div>
<div class="t" style="left:818px;top:385px;font-size:44px;line-height:52px;color:#000">Mech.</div>
<svg style="left:1438px;top:191px;" width="40" height="8" viewBox="0 0 40 8"><path d="M0.5 0 L6.5 6.5 H32.5 L38.5 0" fill="none" stroke="#000"/></svg>
<svg style="left:1456px;top:200px;" width="50" height="14" viewBox="0 0 50 14"><rect x="1" y="6" width="12" height="3" fill="#fff" stroke="#444"/><rect x="18" y="3" width="9" height="9" fill="#fff" stroke="#444" stroke-width="1.5"/><rect x="20" y="0" width="0" height="0"/><rect x="21" y="6" width="3" height="4" fill="none" stroke="#444"/><path d="M36 2 L46 12 M46 2 L36 12" stroke="#444" stroke-width="3"/><path d="M36 2 L46 12 M46 2 L36 12" stroke="#fff" stroke-width="1"/></svg>
<svg style="left:1428px;top:263px;" width="60" height="46" viewBox="0 0 60 46"><path d="M0.5 22 L15.5 0.5 H44.5 L59 22 L44.5 44.5 H15.5 Z" fill="#fff"/></svg>
<div class="a" style="left:1471px;top:221px;width:36px;height:116px;background:#f3f3f3;border:2px solid #c7c7c7;border-radius:5px"></div>
<svg style="left:1495px;top:222px;" width="10" height="10" viewBox="0 0 10 10"><circle cx="5" cy="5" r="4" fill="#ddd" stroke="#bbb"/><path d="M3 3 L7 7 M7 3 L3 7" stroke="#fff"/></svg>
<svg style="left:1477px;top:240px;" width="26" height="26" viewBox="0 0 26 26"><path d="M8 2 H17 Q20 2 20 5 V13 Q20 18 14 18 H8 Q2 18 2 12 V8 Q2 2 8 2Z" fill="#eee" stroke="#bbb" stroke-width="1.5"/><circle cx="10" cy="10" r="4" fill="none" stroke="#bbb" stroke-width="1.3"/><text x="18" y="23" font-size="9" fill="#6f93c8" font-weight="bold" font-family="Liberation Sans" text-anchor="middle">2D</text></svg>
<svg style="left:1484px;top:271px;" width="8" height="4" viewBox="0 0 8 4"><path d="M0 0 H7 L3.5 4Z" fill="#999"/></svg>
<div class="a" style="left:1476px;top:278px;width:26px;height:1px;background:#d0d0d0"></div>
<svg style="left:1481px;top:287px;" width="22" height="22" viewBox="0 0 22 22"><rect x="0" y="0" width="10" height="10" fill="#b5d89b" stroke="#8fb87a"/><circle cx="12" cy="12" r="3.5" fill="none" stroke="#999" stroke-width="1.3"/><path d="M14.5 14.5 L18 18" stroke="#999" stroke-width="1.5"/></svg>
<svg style="left:1484px;top:313px;" width="8" height="4" viewBox="0 0 8 4"><path d="M0 0 H7 L3.5 4Z" fill="#999"/></svg>
<svg style="left:1495px;top:327px;" width="10" height="10" viewBox="0 0 10 10"><circle cx="5" cy="5" r="4" fill="#ddd" stroke="#bbb"/><path d="M2 5 H8" stroke="#fff" stroke-width="1.5"/></svg>
<svg style="left:1428px;top:263px;" width="60" height="46" viewBox="0 0 60 46"><path d="M0.5 22 L15.5 0.5 H44.5 L59 22 L44.5 44.5 H15.5 Z" fill="none" stroke="#000" stroke-width="1"/></svg>
<div class="t" style="left:1440px;top:266px;font-size:30px;line-height:38px;color:#000;-webkit-text-stroke:0.4px #000">46</div>
<div class="a" style="left:1092px;top:424px;width:110px;height:82px;border:1px solid #2b50c8;background:#fff"></div>
<svg style="left:1110px;top:428px;" width="74" height="72" viewBox="0 0 74 72"><path d="M37 2 L50 5 L62 15 L69 32 L69 42 L62 57 L50 66 L37 70 L24 66 L12 57 L5 42 L5 32 L12 15 L24 5Z" fill="none" stroke="#000" stroke-width="1"/></svg>
<div class="a" style="left:1456px;top:557px;width:52px;height:1px;background:#000"></div>
<div class="a" style="left:1456px;top:776px;width:52px;height:1px;background:#000"></div>
<div class="t" style="left:1213px;top:642px;font-size:22px;line-height:24px;color:#000;transform:scaleX(0.8);transform-origin:left">1</div>
<svg style="left:1174px;top:664px;" width="96" height="118" viewBox="0 0 96 118"><circle cx="48.5" cy="67.5" r="46.5" fill="#fff" stroke="#000" stroke-width="1"/><path d="M48.5 2 L16 34 A46.5 46.5 0 0 1 81 34 Z" fill="#000"/></svg>
<div class="t" style="left:1195px;top:716px;font-size:25px;line-height:30px;color:#000;letter-spacing:-1.5px">A1-03</div>
<div class="a" style="left:0px;top:1015px;width:1919px;height:26px;background:linear-gradient(#f2f2f2,#cfcfcf);border-top:1px solid #8a8a8a"></div>
<div class="a" style="left:0px;top:1039px;width:1919px;height:2px;background:#1f2d3c"></div>
<div class="a" style="left:1016px;top:1019px;width:193px;height:20px;background:#fff"></div>
<svg style="left:1198px;top:1028px;" width="9" height="5" viewBox="0 0 9 5"><path d="M0 0 H9 L4.5 5Z" fill="#888"/></svg>
<div class="a" style="left:1213px;top:1019px;width:52px;height:20px;background:#e3e3e3"></div>
<svg style="left:1218px;top:1020px;" width="20" height="18" viewBox="0 0 20 18"><path d="M4 3 H14 L16 6 L10 9 L6 17 L3 16 L6 9 L2 6Z" fill="none" stroke="#888" stroke-width="1.5"/></svg>
<div class="t" style="left:1239px;top:1023px;color:#111">:0</div>
<div class="a" style="left:1270px;top:1019px;width:22px;height:20px;background:#e3e3e3"></div>
<div class="a" style="left:1272px;top:1021px;width:17px;height:16px;background:#888;border-radius:2px"></div>
<div class="a" style="left:1296px;top:1019px;width:20px;height:20px;background:#e3e3e3"></div>
<svg style="left:1297px;top:1021px;" width="17" height="16" viewBox="0 0 17 16"><rect x="1" y="1" width="15" height="14" fill="#888"/><path d="M3 9 H10 M7 6 L10 9 L7 12" stroke="#eee" stroke-width="1.5" fill="none"/></svg>
<div class="a" style="left:1320px;top:1019px;width:155px;height:20px;background:#fff"></div>
<div class="t" style="left:1323px;top:1022px;color:#8a8a8a;font-size:13px">Main Model</div>
<div class="a" style="left:1456px;top:1020px;width:1px;height:18px;background:#eee"></div>
<svg style="left:1463px;top:1028px;" width="9" height="5" viewBox="0 0 9 5"><path d="M0 0 H9 L4.5 5Z" fill="#888"/></svg>
<div class="a" style="left:1697px;top:1018px;width:22px;height:20px;background:#e4e4e4"></div>
<div class="a" style="left:1722px;top:1018px;width:22px;height:20px;background:#e4e4e4"></div>
<div class="a" style="left:1748px;top:1018px;width:22px;height:20px;background:#e4e4e4"></div>
<div class="a" style="left:1773px;top:1018px;width:22px;height:20px;background:#e4e4e4"></div>
<div class="a" style="left:1799px;top:1018px;width:22px;height:20px;background:#e4e4e4"></div>
<svg style="left:1700px;top:1021px;" width="16" height="16" viewBox="0 0 16 16"><path d="M2 3 Q4 0 7 3 Q10 0 13 3 Q14 7 10 8 L9 15 L6 15 L5 8 Q1 7 2 3Z" fill="#888"/></svg>
<svg style="left:1725px;top:1021px;" width="16" height="16" viewBox="0 0 16 16"><path d="M1 14 L10 3 H15 V14Z" fill="#888"/></svg>
<svg style="left:1751px;top:1021px;" width="16" height="16" viewBox="0 0 16 16"><path d="M3 2 H12 L14 8 H10 V15 H6 V8 H1Z" fill="#888"/></svg>
<svg style="left:1776px;top:1021px;" width="16" height="16" viewBox="0 0 16 16"><path d="M1 15 V5 L8 2 L15 5 L13 15Z" fill="#888"/><path d="M10 1 L15 6 M15 1 L10 6" stroke="#888" stroke-width="1.5"/></svg>
<svg style="left:1802px;top:1021px;" width="16" height="16" viewBox="0 0 16 16"><path d="M1 6 H7 M4 3 V9 M9 2 L14 7 M14 2 L9 7 M8 8 L13 13 L10 13 L11 16" stroke="#888" stroke-width="1.2" fill="none"/></svg>
<svg style="left:1825px;top:1020px;" width="18" height="18" viewBox="0 0 18 18"><path d="M1 2 H17 L11 9 V16 L7 14 V9Z" fill="none" stroke="#333" stroke-width="1.5"/></svg>
<div class="t" style="left:1840px;top:1023px;color:#111;font-size:12px">:0</div>
<div class="a" style="left:1530px;top:190px;width:389px;height:825px;background:#f0f0f0"></div>
<div class="a" style="left:1530px;top:190px;width:389px;height:19px;background:#c4d2df"></div>
<div class="t" style="left:1534px;top:193px;color:#4b5563">Project Browser - rac_basic_sample_project.rvt</div>
<svg style="left:1904px;top:195px;" width="10" height="10" viewBox="0 0 10 10"><path d="M1 1 L9 9 M9 1 L1 9" stroke="#111" stroke-width="1.7"/></svg>
<div class="a" style="left:1531px;top:210px;width:388px;height:805px;background:#fff;border-top:2px solid #6b6b6b;border-left:2px solid #6b6b6b"></div>
<div class="a" style="left:1902px;top:212px;width:17px;height:802px;background:#f0f0f0"></div>
<svg style="left:1906px;top:219px;" width="9" height="5" viewBox="0 0 9 5"><path d="M0 5 L4.5 0 L9 5Z" fill="#222"/></svg>
<svg style="left:1906px;top:1003px;" width="9" height="5" viewBox="0 0 9 5"><path d="M0 0 L9 0 L4.5 5Z" fill="#222"/></svg>
<div class="a" style="left:1903px;top:230px;width:15px;height:688px;background:linear-gradient(90deg,#f6f6f6,#e0e0e0);border:1px solid #9a9a9a;border-radius:2px"></div>
<svg style="left:1906px;top:570px;" width="9" height="8" viewBox="0 0 9 8"><path d="M0 1 H9 M0 4 H9 M0 7 H9" stroke="#666"/></svg>
<div class="a" style="left:1540px;top:226px;width:1px;height:702px;border-left:1px dotted #999"></div>
<div class="a" style="left:1560px;top:248px;width:1px;height:492px;border-left:1px dotted #999"></div>
<div class="a" style="left:1580px;top:245px;width:1px;height:48px;border-left:1px dotted #999"></div>
<div class="a" style="left:1580px;top:317px;width:1px;height:120px;border-left:1px dotted #999"></div>
<div class="a" style="left:1580px;top:461px;width:1px;height:66px;border-left:1px dotted #999"></div>
<div class="a" style="left:1580px;top:551px;width:1px;height:48px;border-left:1px dotted #999"></div>
<div class="a" style="left:1580px;top:623px;width:1px;height:12px;border-left:1px dotted #999"></div>
<div class="a" style="left:1580px;top:659px;width:1px;height:66px;border-left:1px dotted #999"></div>
<div class="a" style="left:1580px;top:749px;width:1px;height:84px;border-left:1px dotted #999"></div>
<div class="a" style="left:1560px;top:877px;width:1px;height:29px;border-left:1px dotted #999"></div>
<div class="a" style="left:1560px;top:932px;width:1px;height:82px;border-left:1px dotted #999"></div>
<div class="a" style="left:1536px;top:218px;width:9px;height:9px;background:linear-gradient(#fff,#dcdcdc);border:1px solid #9a9a9a;border-radius:1px"></div>
<div class="a" style="left:1538px;top:222px;width:5px;height:1px;background:#2b3c8f"></div>
<div class="a" style="left:1546px;top:222px;width:6px;height:1px;border-top:1px dotted #999"></div>
<div class="a" style="left:1571px;top:213px;width:59px;height:17px;background:#e3e3e3"></div>
<svg style="left:1552px;top:214px;" width="16" height="15" viewBox="0 0 16 15"><path d="M1 4 V1 H4 M12 1 H15 V4 M15 11 V14 H12 M4 14 H1 V11" fill="none" stroke="#222" stroke-width="1.2"/><path d="M5 5 L7 3 H11 V10 L9 12 H5Z" fill="#ddd" stroke="#333"/></svg>
<div class="t" style="left:1574px;top:214px;color:#111">Views (all)</div>
<div class="a" style="left:1556px;top:236px;width:9px;height:9px;background:linear-gradient(#fff,#dcdcdc);border:1px solid #9a9a9a;border-radius:1px"></div>
<div class="a" style="left:1558px;top:240px;width:5px;height:1px;background:#2b3c8f"></div>
<div class="a" style="left:1566px;top:240px;width:10px;height:1px;border-top:1px dotted #999"></div>
<div class="t" style="left:1578px;top:232px;color:#111">Floor Plans</div>
<div class="a" style="left:1581px;top:258px;width:15px;height:1px;border-top:1px dotted #999"></div>
<div class="t" style="left:1598px;top:250px;color:#111"><b>Level 1</b></div>
<div class="a" style="left:1581px;top:276px;width:15px;height:1px;border-top:1px dotted #999"></div>
<div class="t" style="left:1598px;top:268px;color:#111">Level 2</div>
<div class="a" style="left:1581px;top:294px;width:15px;height:1px;border-top:1px dotted #999"></div>
<div class="t" style="left:1598px;top:286px;color:#111">Site</div>
<div class="a" style="left:1556px;top:308px;width:9px;height:9px;background:linear-gradient(#fff,#dcdcdc);border:1px solid #9a9a9a;border-radius:1px"></div>
<div class="a" style="left:1558px;top:312px;width:5px;height:1px;background:#2b3c8f"></div>
<div class="a" style="left:1566px;top:312px;width:10px;height:1px;border-top:1px dotted #999"></div>
<div class="t" style="left:1578px;top:304px;color:#111">3D Views</div>
<div class="a" style="left:1581px;top:330px;width:15px;height:1px;border-top:1px dotted #999"></div>
<div class="t" style="left:1598px;top:322px;color:#111">Approach</div>
<div class="a" style="left:1581px;top:348px;width:15px;height:1px;border-top:1px dotted #999"></div>
<div class="t" style="left:1598px;top:340px;color:#111">From Yard</div>
<div class="a" style="left:1581px;top:366px;width:15px;height:1px;border-top:1px dotted #999"></div>
<div class="t" style="left:1598px;top:358px;color:#111">Kitchen</div>
<div class="a" style="left:1581px;top:384px;width:15px;height:1px;border-top:1px dotted #999"></div>
<div class="t" style="left:1598px;top:376px;color:#111">Living Room</div>
<div class="a" style="left:1581px;top:402px;width:15px;height:1px;border-top:1px dotted #999"></div>
<div class="t" style="left:1598px;top:394px;color:#111">Section Perspective</div>
<div class="a" style="left:1581px;top:420px;width:15px;height:1px;border-top:1px dotted #999"></div>
<div class="t" style="left:1598px;top:412px;color:#111">Solar Analysis</div>
<div class="a" style="left:1581px;top:438px;width:15px;height:1px;border-top:1px dotted #999"></div>
<div class="t" style="left:1598px;top:430px;color:#111">{3D}</div>
<div class="a" style="left:1556px;top:452px;width:9px;height:9px;background:linear-gradient(#fff,#dcdcdc);border:1px solid #9a9a9a;border-radius:1px"></div>
<div class="a" style="left:1558px;top:456px;width:5px;height:1px;background:#2b3c8f"></div>
<div class="a" style="left:1566px;top:456px;width:10px;height:1px;border-top:1px dotted #999"></div>
<div class="t" style="left:1578px;top:448px;color:#111">Elevations (Building Elevation)</div>
<div class="a" style="left:1581px;top:474px;width:15px;height:1px;border-top:1px dotted #999"></div>
<div class="t" style="left:1598px;top:466px;color:#111">East</div>
<div class="a" style="left:1581px;top:492px;width:15px;height:1px;border-top:1px dotted #999"></div>
<div class="t" style="left:1598px;top:484px;color:#111">North</div>
<div class="a" style="left:1581px;top:510px;width:15px;height:1px;border-top:1px dotted #999"></div>
<div class="t" style="left:1598px;top:502px;color:#111">South</div>
<div class="a" style="left:1581px;top:528px;width:15px;height:1px;border-top:1px dotted #999"></div>
<div class="t" style="left:1598px;top:520px;color:#111">West</div>
<div class="a" style="left:1556px;top:542px;width:9px;height:9px;background:linear-gradient(#fff,#dcdcdc);border:1px solid #9a9a9a;border-radius:1px"></div>
<div class="a" style="left:1558px;top:546px;width:5px;height:1px;background:#2b3c8f"></div>
<div class="a" style="left:1566px;top:546px;width:10px;height:1px;border-top:1px dotted #999"></div>
<div class="t" style="left:1578px;top:538px;color:#111">Sections (Building Section)</div>
<div class="a" style="left:1581px;top:564px;width:15px;height:1px;border-top:1px dotted #999"></div>
<div class="t" style="left:1598px;top:556px;color:#111">Building Section</div>
<div class="a" style="left:1581px;top:582px;width:15px;height:1px;border-top:1px dotted #999"></div>
<div class="t" style="left:1598px;top:574px;color:#111">Longitudinal Section</div>
<div class="a" style="left:1581px;top:600px;width:15px;height:1px;border-top:1px dotted #999"></div>
<div class="t" style="left:1598px;top:592px;color:#111">Stair Section</div>
<div class="a" style="left:1556px;top:614px;width:9px;height:9px;background:linear-gradient(#fff,#dcdcdc);border:1px solid #9a9a9a;border-radius:1px"></div>
<div class="a" style="left:1558px;top:618px;width:5px;height:1px;background:#2b3c8f"></div>
<div class="a" style="left:1566px;top:618px;width:10px;height:1px;border-top:1px dotted #999"></div>
<div class="t" style="left:1578px;top:610px;color:#111">Sections (Wall Section)</div>
<div class="a" style="left:1581px;top:636px;width:15px;height:1px;border-top:1px dotted #999"></div>
<div class="t" style="left:1598px;top:628px;color:#111">Typ. Wall Section</div>
<div class="a" style="left:1556px;top:650px;width:9px;height:9px;background:linear-gradient(#fff,#dcdcdc);border:1px solid #9a9a9a;border-radius:1px"></div>
<div class="a" style="left:1558px;top:654px;width:5px;height:1px;background:#2b3c8f"></div>
<div class="a" style="left:1566px;top:654px;width:10px;height:1px;border-top:1px dotted #999"></div>
<div class="t" style="left:1578px;top:646px;color:#111">Detail Views (Detail)</div>
<div class="a" style="left:1581px;top:672px;width:15px;height:1px;border-top:1px dotted #999"></div>
<div class="t" style="left:1598px;top:664px;color:#111">Main Stair Detail</div>
<div class="a" style="left:1581px;top:690px;width:15px;height:1px;border-top:1px dotted #999"></div>
<div class="t" style="left:1598px;top:682px;color:#111">Typical Floor Wall Connection</div>
<div class="a" style="left:1581px;top:708px;width:15px;height:1px;border-top:1px dotted #999"></div>
<div class="t" style="left:1598px;top:700px;color:#111">Typical Foundation Detail</div>
<div class="a" style="left:1581px;top:726px;width:15px;height:1px;border-top:1px dotted #999"></div>
<div class="t" style="left:1598px;top:718px;color:#111">Typical Wall Roof Connection</div>
<div class="a" style="left:1556px;top:740px;width:9px;height:9px;background:linear-gradient(#fff,#dcdcdc);border:1px solid #9a9a9a;border-radius:1px"></div>
<div class="a" style="left:1558px;top:744px;width:5px;height:1px;background:#2b3c8f"></div>
<div class="a" style="left:1566px;top:744px;width:10px;height:1px;border-top:1px dotted #999"></div>
<div class="t" style="left:1578px;top:736px;color:#111">Renderings</div>
<div class="a" style="left:1581px;top:762px;width:15px;height:1px;border-top:1px dotted #999"></div>
<div class="t" style="left:1598px;top:754px;color:#111">Approach</div>
<div class="a" style="left:1581px;top:780px;width:15px;height:1px;border-top:1px dotted #999"></div>
<div class="t" style="left:1598px;top:772px;color:#111">From Yard</div>
<div class="a" style="left:1581px;top:798px;width:15px;height:1px;border-top:1px dotted #999"></div>
<div class="t" style="left:1598px;top:790px;color:#111">Kitchen</div>
<div class="a" style="left:1581px;top:816px;width:15px;height:1px;border-top:1px dotted #999"></div>
<div class="t" style="left:1598px;top:808px;color:#111">Living Room</div>
<div class="a" style="left:1581px;top:834px;width:15px;height:1px;border-top:1px dotted #999"></div>
<div class="t" style="left:1598px;top:826px;color:#111">Section Perspective</div>
<div class="a" style="left:1541px;top:852px;width:10px;height:1px;border-top:1px dotted #999"></div>
<div class="a" style="left:1546px;top:852px;width:6px;height:1px;border-top:1px dotted #999"></div>
<svg style="left:1552px;top:843px;" width="16" height="16" viewBox="0 0 16 16"><rect x="0.5" y="0.5" width="15" height="15" fill="#eee" stroke="#444"/><rect x="1" y="1" width="14" height="3" fill="#666"/><rect x="3" y="6" width="3" height="3" fill="#666"/><circle cx="4.5" cy="12" r="1.5" fill="#666"/><path d="M8 7 H13 M8 12 H13" stroke="#666"/></svg>
<div class="t" style="left:1575px;top:844px;color:#111">Legends</div>
<div class="a" style="left:1536px;top:866px;width:9px;height:9px;background:linear-gradient(#fff,#dcdcdc);border:1px solid #9a9a9a;border-radius:1px"></div>
<div class="a" style="left:1538px;top:870px;width:5px;height:1px;background:#2b3c8f"></div>
<div class="a" style="left:1546px;top:870px;width:6px;height:1px;border-top:1px dotted #999"></div>
<svg style="left:1552px;top:861px;" width="16" height="16" viewBox="0 0 16 16"><rect x="0.5" y="1.5" width="15" height="13" fill="#eee" stroke="#444"/><rect x="1" y="2" width="14" height="2" fill="#555"/><path d="M1 7 H15 M1 10 H15 M5 4 V14" stroke="#666"/></svg>
<div class="t" style="left:1575px;top:862px;color:#111">Schedules/Quantities</div>
<div class="a" style="left:1561px;top:888px;width:15px;height:1px;border-top:1px dotted #999"></div>
<div class="t" style="left:1578px;top:880px;color:#111">How do I</div>
<div class="a" style="left:1561px;top:906px;width:15px;height:1px;border-top:1px dotted #999"></div>
<div class="t" style="left:1578px;top:898px;color:#111">Planting Schedule</div>
<div class="a" style="left:1536px;top:920px;width:9px;height:9px;background:linear-gradient(#fff,#dcdcdc);border:1px solid #9a9a9a;border-radius:1px"></div>
<div class="a" style="left:1538px;top:924px;width:5px;height:1px;background:#2b3c8f"></div>
<div class="a" style="left:1546px;top:924px;width:6px;height:1px;border-top:1px dotted #999"></div>
<svg style="left:1552px;top:915px;" width="16" height="16" viewBox="0 0 16 16"><path d="M0.5 1.5 H11 L15.5 6 V15 H0.5Z" fill="#eee" stroke="#444"/><path d="M3 13 V5 H10 V12 M6 13 V8 H8" fill="none" stroke="#888" stroke-width="1.2"/></svg>
<div class="t" style="left:1575px;top:916px;color:#111">Sheets (all)</div>
<div class="a" style="left:1556px;top:938px;width:9px;height:9px;background:linear-gradient(#fff,#dcdcdc);border:1px solid #9a9a9a;border-radius:1px"></div>
<div class="a" style="left:1558px;top:942px;width:5px;height:1px;background:#2b3c8f"></div>
<div class="a" style="left:1560px;top:940px;width:1px;height:5px;background:#2b3c8f"></div>
<div class="a" style="left:1566px;top:942px;width:10px;height:1px;border-top:1px dotted #999"></div>
<div class="t" style="left:1578px;top:934px;color:#111">A001 - Title Sheet</div>
<div class="a" style="left:1556px;top:956px;width:9px;height:9px;background:linear-gradient(#fff,#dcdcdc);border:1px solid #9a9a9a;border-radius:1px"></div>
<div class="a" style="left:1558px;top:960px;width:5px;height:1px;background:#2b3c8f"></div>
<div class="a" style="left:1560px;top:958px;width:1px;height:5px;background:#2b3c8f"></div>
<div class="a" style="left:1566px;top:960px;width:10px;height:1px;border-top:1px dotted #999"></div>
<div class="t" style="left:1578px;top:952px;color:#111">A101 - Site Plan</div>
<div class="a" style="left:1556px;top:974px;width:9px;height:9px;background:linear-gradient(#fff,#dcdcdc);border:1px solid #9a9a9a;border-radius:1px"></div>
<div class="a" style="left:1558px;top:978px;width:5px;height:1px;background:#2b3c8f"></div>
<div class="a" style="left:1560px;top:976px;width:1px;height:5px;background:#2b3c8f"></div>
<div class="a" style="left:1566px;top:978px;width:10px;height:1px;border-top:1px dotted #999"></div>
<div class="t" style="left:1578px;top:970px;color:#111">A102 - Plans</div>
<div class="a" style="left:1556px;top:992px;width:9px;height:9px;background:linear-gradient(#fff,#dcdcdc);border:1px solid #9a9a9a;border-radius:1px"></div>
<div class="a" style="left:1558px;top:996px;width:5px;height:1px;background:#2b3c8f"></div>
<div class="a" style="left:1560px;top:994px;width:1px;height:5px;background:#2b3c8f"></div>
<div class="a" style="left:1566px;top:996px;width:10px;height:1px;border-top:1px dotted #999"></div>
<div class="t" style="left:1578px;top:988px;color:#111">A103 - Elevations/Sections</div>
<div class="a" style="left:1556px;top:1010px;width:9px;height:9px;background:linear-gradient(#fff,#dcdcdc);border:1px solid #9a9a9a;border-radius:1px"></div>
<div class="a" style="left:1558px;top:1014px;width:5px;height:1px;background:#2b3c8f"></div>
<div class="a" style="left:1560px;top:1012px;width:1px;height:5px;background:#2b3c8f"></div>
<div class="a" style="left:1566px;top:1014px;width:10px;height:1px;border-top:1px dotted #999"></div>
<div class="t" style="left:1578px;top:1006px;color:#111">A104 - Elev./Sec./Det.</div>
<div class="a" style="left:590px;top:517px;width:456px;height:249px;background:#fff;border:2px solid #1d4ed0"></div>
<div class="a" style="left:592px;top:519px;width:452px;height:9px;background:linear-gradient(90deg,#a8c4e2 0%,#8eb0d6 20%,#b9d2ea 35%,#7d9fc7 60%,#6b90bd 100%)"></div>
<div class="a" style="left:592px;top:519px;width:13px;height:14px;background:linear-gradient(#e0e0e0,#6e6e6e);border:1px solid #333"></div>
<svg style="left:594px;top:521px;" width="8" height="10" viewBox="0 0 8 10"><path d="M1 10 L2 3 L4 1 L7 1 L8 4 L5 6 L8 10 L6 10 L3 6 L3 10Z" fill="#1d3fa8"/></svg>
<div class="t" style="left:634px;top:520px;font-size:5px;line-height:6px;color:#555;color:#333;font-size:5px;letter-spacing:-0.35px;line-height:7px">Autodesk Revit 2014 - Not For Resale Version - &nbsp; rac_basic_sample_project.rvt - Sheet: A001 - Title Sheet</div>
<div class="a" style="left:845px;top:519px;width:159px;height:9px;background:linear-gradient(#e8e8e8,#c8c8c8)"></div>
<div class="a" style="left:850px;top:520px;width:60px;height:7px;background:#fff;border:1px solid #ccc"></div>
<div class="t" style="left:852px;top:520px;font-size:5px;line-height:6px;color:#555;color:#aaa;font-size:4px;line-height:7px">Type a keyword or phrase</div>
<div class="a" style="left:913px;top:521px;width:5px;height:5px;border:1px solid #777;border-radius:1px"></div>
<div class="a" style="left:921px;top:521px;width:5px;height:5px;border:1px solid #777;border-radius:1px"></div>
<div class="a" style="left:928px;top:521px;width:5px;height:5px;border:1px solid #777;border-radius:1px"></div>
<div class="a" style="left:935px;top:521px;width:5px;height:5px;border:1px solid #777;border-radius:1px"></div>
<div class="a" style="left:942px;top:521px;width:5px;height:5px;border:1px solid #777;border-radius:1px"></div>
<div class="t" style="left:948px;top:520px;font-size:5px;line-height:6px;color:#555;color:#444;font-size:4px;line-height:7px">Sign In</div>
<div class="a" style="left:975px;top:521px;width:5px;height:5px;background:#345db0"></div>
<div class="a" style="left:984px;top:521px;width:5px;height:5px;border:1px solid #556;border-radius:3px"></div>
<div class="a" style="left:1004px;top:519px;width:40px;height:9px;background:linear-gradient(#c5dcf2,#9dc0e6)"></div>
<div class="a" style="left:605px;top:528px;width:439px;height:7px;background:#a9a9a9"></div>
<div class="a" style="left:608px;top:529px;width:27px;height:6px;background:#fafafa"></div>
<div class="t" style="left:609px;top:528px;font-size:5px;line-height:6px;color:#555;color:#333;font-size:4px;line-height:7px;letter-spacing:-0.1px">Architecture &nbsp; &nbsp; Structure &nbsp; &nbsp;Systems &nbsp; &nbsp;Insert &nbsp; &nbsp;Annotate &nbsp; &nbsp;Analyze &nbsp; &nbsp;Massing &amp; Site &nbsp; &nbsp;Collaborate &nbsp; &nbsp;View &nbsp; &nbsp; Manage &nbsp; &nbsp;Add-Ins &nbsp; &nbsp;Bonus Tools &nbsp; &nbsp;Modify</div>
<div class="a" style="left:592px;top:535px;width:436px;height:25px;background:#f8f8f8"></div>
<div class="a" style="left:1028px;top:535px;width:16px;height:31px;background:linear-gradient(#eaeaea,#a5a5a5)"></div>
<div class="a" style="left:594px;top:536px;width:15px;height:23px;background:#c6def4;border:1px solid #86acd4"></div>
<svg style="left:599px;top:538px;" width="6" height="7" viewBox="0 0 6 7"><path d="M1 0 L1 6 L2.5 4.5 L4 7 L5 6.5 L3.5 4 L5.5 4Z" fill="#333"/></svg>
<div class="t" style="left:595px;top:548px;font-size:5px;line-height:6px;color:#555;color:#333;font-size:4px">Modify</div>
<div class="a" style="left:617px;top:538px;width:10px;height:11px;background:#ececec;border:1px solid #d2d2d2;border-radius:1px"></div>
<div class="a" style="left:631px;top:538px;width:8px;height:11px;background:#ececec;border:1px solid #d2d2d2;border-radius:1px"></div>
<div class="a" style="left:643px;top:538px;width:12px;height:11px;background:#ececec;border:1px solid #d2d2d2;border-radius:1px"></div>
<div class="a" style="left:663px;top:538px;width:14px;height:11px;background:#ececec;border:1px solid #d2d2d2;border-radius:1px"></div>
<div class="a" style="left:688px;top:538px;width:6px;height:11px;background:#ececec;border:1px solid #d2d2d2;border-radius:1px"></div>
<div class="t" style="left:618px;top:551px;font-size:5px;line-height:6px;color:#555;color:#bbb;font-size:4px;letter-spacing:-0.1px">Wall &nbsp; Door &nbsp;Window &nbsp; Component &nbsp; &nbsp;Column</div>
<div class="a" style="left:710px;top:538px;width:4px;height:4px;background:#ddd;border:1px solid #c4c4c4"></div>
<div class="t" style="left:716px;top:537px;font-size:5px;line-height:6px;color:#555;color:#c0c0c0;font-size:4px">Roof</div>
<div class="a" style="left:710px;top:546px;width:4px;height:4px;background:#ddd;border:1px solid #c4c4c4"></div>
<div class="t" style="left:716px;top:545px;font-size:5px;line-height:6px;color:#555;color:#c0c0c0;font-size:4px">Ceiling</div>
<div class="a" style="left:710px;top:554px;width:4px;height:4px;background:#ddd;border:1px solid #c4c4c4"></div>
<div class="t" style="left:716px;top:553px;font-size:5px;line-height:6px;color:#555;color:#c0c0c0;font-size:4px">Floor</div>
<div class="a" style="left:733px;top:538px;width:4px;height:4px;background:#ddd;border:1px solid #c4c4c4"></div>
<div class="t" style="left:739px;top:537px;font-size:5px;line-height:6px;color:#555;color:#c0c0c0;font-size:4px">Curtain System</div>
<div class="a" style="left:733px;top:546px;width:4px;height:4px;background:#ddd;border:1px solid #c4c4c4"></div>
<div class="t" style="left:739px;top:545px;font-size:5px;line-height:6px;color:#555;color:#c0c0c0;font-size:4px">Curtain Grid</div>
<div class="a" style="left:733px;top:554px;width:4px;height:4px;background:#ddd;border:1px solid #c4c4c4"></div>
<div class="t" style="left:739px;top:553px;font-size:5px;line-height:6px;color:#555;color:#c0c0c0;font-size:4px">Mullion</div>
<div class="a" style="left:774px;top:538px;width:4px;height:4px;background:#ddd;border:1px solid #c4c4c4"></div>
<div class="t" style="left:780px;top:537px;font-size:5px;line-height:6px;color:#555;color:#c0c0c0;font-size:4px">Railing</div>
<div class="a" style="left:774px;top:546px;width:4px;height:4px;background:#ddd;border:1px solid #c4c4c4"></div>
<div class="t" style="left:780px;top:545px;font-size:5px;line-height:6px;color:#555;color:#c0c0c0;font-size:4px">Ramp</div>
<div class="a" style="left:774px;top:554px;width:4px;height:4px;background:#ddd;border:1px solid #c4c4c4"></div>
<div class="t" style="left:780px;top:553px;font-size:5px;line-height:6px;color:#555;color:#c0c0c0;font-size:4px">Stair</div>
<div class="a" style="left:801px;top:538px;width:4px;height:4px;background:#ddd;border:1px solid #c4c4c4"></div>
<div class="t" style="left:807px;top:537px;font-size:5px;line-height:6px;color:#555;color:#c0c0c0;font-size:4px">Model Text</div>
<div class="a" style="left:801px;top:546px;width:4px;height:4px;background:#ddd;border:1px solid #c4c4c4"></div>
<div class="t" style="left:807px;top:545px;font-size:5px;line-height:6px;color:#555;color:#c0c0c0;font-size:4px">Model Line</div>
<div class="a" style="left:801px;top:554px;width:4px;height:4px;background:#ddd;border:1px solid #c4c4c4"></div>
<div class="t" style="left:807px;top:553px;font-size:5px;line-height:6px;color:#555;color:#c0c0c0;font-size:4px">Model Group</div>
<div class="a" style="left:849px;top:538px;width:4px;height:4px;background:#ddd;border:1px solid #c4c4c4"></div>
<div class="t" style="left:855px;top:537px;font-size:5px;line-height:6px;color:#555;color:#c0c0c0;font-size:4px">Room</div>
<div class="a" style="left:849px;top:546px;width:4px;height:4px;background:#ddd;border:1px solid #c4c4c4"></div>
<div class="t" style="left:855px;top:545px;font-size:5px;line-height:6px;color:#555;color:#c0c0c0;font-size:4px">Room Separator</div>
<div class="a" style="left:849px;top:554px;width:4px;height:4px;background:#ddd;border:1px solid #c4c4c4"></div>
<div class="t" style="left:855px;top:553px;font-size:5px;line-height:6px;color:#555;color:#c0c0c0;font-size:4px">Tag Room</div>
<div class="a" style="left:875px;top:538px;width:4px;height:4px;background:#ddd;border:1px solid #c4c4c4"></div>
<div class="t" style="left:881px;top:537px;font-size:5px;line-height:6px;color:#555;color:#c0c0c0;font-size:4px">Area</div>
<div class="a" style="left:875px;top:546px;width:4px;height:4px;background:#ddd;border:1px solid #c4c4c4"></div>
<div class="t" style="left:881px;top:545px;font-size:5px;line-height:6px;color:#555;color:#c0c0c0;font-size:4px">Area Boundary</div>
<div class="a" style="left:875px;top:554px;width:4px;height:4px;background:#ddd;border:1px solid #c4c4c4"></div>
<div class="t" style="left:881px;top:553px;font-size:5px;line-height:6px;color:#555;color:#c0c0c0;font-size:4px">Tag Area</div>
<div class="a" style="left:925px;top:538px;width:4px;height:4px;background:#ddd;border:1px solid #c4c4c4"></div>
<div class="t" style="left:931px;top:537px;font-size:5px;line-height:6px;color:#555;color:#c0c0c0;font-size:4px">By</div>
<div class="a" style="left:925px;top:546px;width:4px;height:4px;background:#ddd;border:1px solid #c4c4c4"></div>
<div class="t" style="left:931px;top:545px;font-size:5px;line-height:6px;color:#555;color:#c0c0c0;font-size:4px">Face</div>
<div class="a" style="left:948px;top:538px;width:4px;height:4px;background:#ddd;border:1px solid #c4c4c4"></div>
<div class="t" style="left:954px;top:537px;font-size:5px;line-height:6px;color:#555;color:#c0c0c0;font-size:4px">Wall</div>
<div class="a" style="left:948px;top:546px;width:4px;height:4px;background:#ddd;border:1px solid #c4c4c4"></div>
<div class="t" style="left:954px;top:545px;font-size:5px;line-height:6px;color:#555;color:#c0c0c0;font-size:4px">Vertical</div>
<div class="a" style="left:948px;top:554px;width:4px;height:4px;background:#ddd;border:1px solid #c4c4c4"></div>
<div class="t" style="left:954px;top:553px;font-size:5px;line-height:6px;color:#555;color:#c0c0c0;font-size:4px">Dormer</div>
<div class="a" style="left:974px;top:538px;width:4px;height:4px;background:#ddd;border:1px solid #c4c4c4"></div>
<div class="t" style="left:980px;top:537px;font-size:5px;line-height:6px;color:#555;color:#c0c0c0;font-size:4px">Level</div>
<div class="a" style="left:974px;top:546px;width:4px;height:4px;background:#ddd;border:1px solid #c4c4c4"></div>
<div class="t" style="left:980px;top:545px;font-size:5px;line-height:6px;color:#555;color:#c0c0c0;font-size:4px">Grid</div>
<div class="a" style="left:999px;top:538px;width:4px;height:4px;background:#ddd;border:1px solid #c4c4c4"></div>
<div class="t" style="left:1005px;top:537px;font-size:5px;line-height:6px;color:#555;color:#c0c0c0;font-size:4px">Show</div>
<div class="a" style="left:999px;top:546px;width:4px;height:4px;background:#ddd;border:1px solid #c4c4c4"></div>
<div class="t" style="left:1005px;top:545px;font-size:5px;line-height:6px;color:#555;color:#c0c0c0;font-size:4px">Ref Plane</div>
<div class="a" style="left:999px;top:554px;width:4px;height:4px;background:#ddd;border:1px solid #c4c4c4"></div>
<div class="t" style="left:1005px;top:553px;font-size:5px;line-height:6px;color:#555;color:#c0c0c0;font-size:4px">Viewer</div>
<div class="a" style="left:875px;top:538px;width:4px;height:4px;background:#e0c020;border:1px solid #a08a20"></div>
<div class="t" style="left:881px;top:537px;font-size:5px;line-height:6px;color:#555;color:#444;font-size:4px">Area</div>
<div class="t" style="left:807px;top:553px;font-size:5px;line-height:6px;color:#555;color:#444;font-size:4px">Model Group</div>
<div class="a" style="left:802px;top:554px;width:4px;height:4px;border:1px solid #555"></div>
<div class="a" style="left:613px;top:537px;width:1px;height:29px;background:#e0e0e0"></div>
<div class="a" style="left:774px;top:537px;width:1px;height:29px;background:#e0e0e0"></div>
<div class="a" style="left:798px;top:537px;width:1px;height:29px;background:#e0e0e0"></div>
<div class="a" style="left:848px;top:537px;width:1px;height:29px;background:#e0e0e0"></div>
<div class="a" style="left:914px;top:537px;width:1px;height:29px;background:#e0e0e0"></div>
<div class="a" style="left:965px;top:537px;width:1px;height:29px;background:#e0e0e0"></div>
<div class="a" style="left:989px;top:537px;width:1px;height:29px;background:#e0e0e0"></div>
<div class="a" style="left:592px;top:560px;width:436px;height:6px;background:#ececec;border-top:1px solid #ddd"></div>
<div class="t" style="left:595px;top:560px;font-size:5px;line-height:6px;color:#555;color:#777;font-size:4px">Select ▾</div>
<div class="t" style="left:691px;top:560px;font-size:5px;line-height:6px;color:#555;color:#888;font-size:4px">Build</div>
<div class="t" style="left:776px;top:560px;font-size:5px;line-height:6px;color:#555;color:#888;font-size:4px">Circulation</div>
<div class="t" style="left:816px;top:560px;font-size:5px;line-height:6px;color:#555;color:#888;font-size:4px">Model</div>
<div class="t" style="left:859px;top:560px;font-size:5px;line-height:6px;color:#555;color:#888;font-size:4px">Room &amp; Area ▾</div>
<div class="t" style="left:928px;top:560px;font-size:5px;line-height:6px;color:#555;color:#888;font-size:4px">Opening</div>
<div class="t" style="left:972px;top:560px;font-size:5px;line-height:6px;color:#555;color:#888;font-size:4px">Datum</div>
<div class="t" style="left:995px;top:560px;font-size:5px;line-height:6px;color:#555;color:#888;font-size:4px">Work Plane</div>
<div class="a" style="left:592px;top:566px;width:452px;height:9px;background:linear-gradient(#ececec,#cfcfcf);border-top:1px solid #999"></div>
<div class="a" style="left:596px;top:568px;width:5px;height:5px;background:#aaa;opacity:0.8;border-radius:1px"></div>
<div class="a" style="left:604px;top:568px;width:5px;height:5px;background:#aaa;opacity:0.8;border-radius:1px"></div>
<div class="a" style="left:613px;top:568px;width:5px;height:5px;background:#aaa;opacity:0.8;border-radius:1px"></div>
<div class="a" style="left:622px;top:568px;width:5px;height:5px;background:#aaa;opacity:0.8;border-radius:1px"></div>
<div class="a" style="left:630px;top:568px;width:5px;height:5px;background:#aaa;opacity:0.8;border-radius:1px"></div>
<div class="a" style="left:641px;top:568px;width:5px;height:5px;background:#aaa;opacity:0.8;border-radius:1px"></div>
<div class="a" style="left:650px;top:568px;width:5px;height:5px;background:#aaa;opacity:0.8;border-radius:1px"></div>
<div class="a" style="left:658px;top:568px;width:5px;height:5px;background:#aaa;opacity:0.8;border-radius:1px"></div>
<div class="a" style="left:666px;top:568px;width:5px;height:5px;background:#aaa;opacity:0.8;border-radius:1px"></div>
<div class="a" style="left:674px;top:568px;width:5px;height:5px;background:#aaa;opacity:0.8;border-radius:1px"></div>
<div class="a" style="left:683px;top:568px;width:5px;height:5px;background:#aaa;opacity:0.8;border-radius:1px"></div>
<div class="a" style="left:691px;top:568px;width:5px;height:5px;background:#aaa;opacity:0.8;border-radius:1px"></div>
<div class="a" style="left:700px;top:568px;width:5px;height:5px;background:#aaa;opacity:0.8;border-radius:1px"></div>
<div class="a" style="left:711px;top:568px;width:5px;height:5px;background:#aaa;opacity:0.8;border-radius:1px"></div>
<div class="a" style="left:719px;top:568px;width:5px;height:5px;background:#aaa;opacity:0.8;border-radius:1px"></div>
<div class="a" style="left:729px;top:568px;width:5px;height:5px;background:#aaa;opacity:0.8;border-radius:1px"></div>
<div class="a" style="left:739px;top:568px;width:5px;height:5px;background:#aaa;opacity:0.8;border-radius:1px"></div>
<div class="a" style="left:747px;top:568px;width:5px;height:5px;background:#aaa;opacity:0.8;border-radius:1px"></div>
<div class="a" style="left:641px;top:568px;width:6px;height:5px;background:#e0b040"></div>
<div class="a" style="left:592px;top:575px;width:452px;height:9px;background:#e2e2e4;border-top:1px solid #888"></div>
<div class="a" style="left:592px;top:584px;width:99px;height:181px;background:#fff"></div>
<div class="a" style="left:592px;top:584px;width:99px;height:6px;background:#c4d2df"></div>
<div class="t" style="left:593px;top:584px;font-size:5px;line-height:6px;color:#555;color:#667;font-size:4px">Properties</div>
<div class="a" style="left:685px;top:585px;width:4px;height:4px;background:#333;opacity:0.6"></div>
<div class="a" style="left:592px;top:590px;width:99px;height:25px;background:linear-gradient(#fafafa,#eee);border-top:1px solid #777"></div>
<div class="a" style="left:594px;top:592px;width:22px;height:22px;background:#f0f0f0;border:1px solid #ddd"></div>
<div class="a" style="left:599px;top:598px;width:12px;height:9px;border:1px solid #333;background:#eef"></div>
<div class="t" style="left:620px;top:600px;font-size:5px;line-height:6px;color:#555;color:#666;font-size:4px">Sheet</div>
<div class="a" style="left:593px;top:615px;width:69px;height:7px;background:linear-gradient(#fafafa,#e2e2e2);border:1px solid #999"></div>
<div class="t" style="left:595px;top:615px;font-size:5px;line-height:6px;color:#555;color:#444;font-size:4px">Sheet: Title Sheet</div>
<div class="t" style="left:669px;top:615px;font-size:5px;line-height:6px;color:#555;color:#666;font-size:4px">Edit Type</div>
<div class="a" style="left:592px;top:623px;width:93px;height:6px;background:#dcdcdc"></div>
<div class="t" style="left:593px;top:623px;font-size:5px;line-height:6px;color:#555;color:#333;font-size:4px;font-weight:bold">Graphics</div>
<div class="a" style="left:592px;top:629px;width:93px;height:6px;border-bottom:1px dotted #c4c4c4"></div>
<div class="a" style="left:640px;top:629px;width:1px;height:6px;background:#d6d6d6"></div>
<div class="t" style="left:598px;top:629px;font-size:5px;line-height:6px;color:#555;color:#999;font-size:4px">Visibility/Graphics Ov...</div>
<div class="a" style="left:642px;top:630px;width:42px;height:5px;background:#e4e4e4;border:1px solid #888"></div>
<div class="a" style="left:592px;top:635px;width:93px;height:6px;border-bottom:1px dotted #c4c4c4"></div>
<div class="a" style="left:640px;top:635px;width:1px;height:6px;background:#d6d6d6"></div>
<div class="t" style="left:598px;top:635px;font-size:5px;line-height:6px;color:#555;color:#999;font-size:4px">Scale</div>
<div class="t" style="left:643px;top:635px;font-size:5px;line-height:6px;color:#555;color:#aaa;font-size:4px">1:1</div>
<div class="a" style="left:592px;top:641px;width:93px;height:6px;background:#dcdcdc"></div>
<div class="t" style="left:593px;top:641px;font-size:5px;line-height:6px;color:#555;color:#333;font-size:4px;font-weight:bold">Identity Data</div>
<div class="a" style="left:592px;top:647px;width:93px;height:6px;border-bottom:1px dotted #c4c4c4"></div>
<div class="a" style="left:640px;top:647px;width:1px;height:6px;background:#d6d6d6"></div>
<div class="t" style="left:598px;top:647px;font-size:5px;line-height:6px;color:#555;color:#999;font-size:4px">Dependency</div>
<div class="t" style="left:643px;top:647px;font-size:5px;line-height:6px;color:#555;color:#aaa;font-size:4px">Independent</div>
<div class="a" style="left:592px;top:653px;width:93px;height:6px;border-bottom:1px dotted #c4c4c4"></div>
<div class="a" style="left:640px;top:653px;width:1px;height:6px;background:#d6d6d6"></div>
<div class="t" style="left:598px;top:653px;font-size:5px;line-height:6px;color:#555;color:#999;font-size:4px">Referencing Sheet</div>
<div class="a" style="left:592px;top:659px;width:93px;height:6px;border-bottom:1px dotted #c4c4c4"></div>
<div class="a" style="left:640px;top:659px;width:1px;height:6px;background:#d6d6d6"></div>
<div class="t" style="left:598px;top:659px;font-size:5px;line-height:6px;color:#555;color:#999;font-size:4px">Referencing Detail</div>
<div class="a" style="left:592px;top:665px;width:93px;height:6px;border-bottom:1px dotted #c4c4c4"></div>
<div class="a" style="left:640px;top:665px;width:1px;height:6px;background:#d6d6d6"></div>
<div class="t" style="left:598px;top:665px;font-size:5px;line-height:6px;color:#555;color:#999;font-size:4px">Current Revision Issued</div>
<div class="a" style="left:642px;top:666px;width:4px;height:4px;border:1px solid #aaa"></div>
<div class="a" style="left:592px;top:671px;width:93px;height:6px;border-bottom:1px dotted #c4c4c4"></div>
<div class="a" style="left:640px;top:671px;width:1px;height:6px;background:#d6d6d6"></div>
<div class="t" style="left:598px;top:671px;font-size:5px;line-height:6px;color:#555;color:#999;font-size:4px">Current Revision Issue...</div>
<div class="a" style="left:592px;top:677px;width:93px;height:6px;border-bottom:1px dotted #c4c4c4"></div>
<div class="a" style="left:640px;top:677px;width:1px;height:6px;background:#d6d6d6"></div>
<div class="t" style="left:598px;top:677px;font-size:5px;line-height:6px;color:#555;color:#999;font-size:4px">Current Revision Issue...</div>
<div class="a" style="left:592px;top:683px;width:93px;height:6px;border-bottom:1px dotted #c4c4c4"></div>
<div class="a" style="left:640px;top:683px;width:1px;height:6px;background:#d6d6d6"></div>
<div class="t" style="left:598px;top:683px;font-size:5px;line-height:6px;color:#555;color:#999;font-size:4px">Current Revision Date</div>
<div class="a" style="left:592px;top:689px;width:93px;height:6px;border-bottom:1px dotted #c4c4c4"></div>
<div class="a" style="left:640px;top:689px;width:1px;height:6px;background:#d6d6d6"></div>
<div class="t" style="left:598px;top:689px;font-size:5px;line-height:6px;color:#555;color:#999;font-size:4px">Current Revision Desc...</div>
<div class="a" style="left:592px;top:695px;width:93px;height:6px;border-bottom:1px dotted #c4c4c4"></div>
<div class="a" style="left:640px;top:695px;width:1px;height:6px;background:#d6d6d6"></div>
<div class="t" style="left:598px;top:695px;font-size:5px;line-height:6px;color:#555;color:#999;font-size:4px">Current Revision</div>
<div class="a" style="left:592px;top:701px;width:93px;height:6px;border-bottom:1px dotted #c4c4c4"></div>
<div class="a" style="left:640px;top:701px;width:1px;height:6px;background:#d6d6d6"></div>
<div class="t" style="left:598px;top:701px;font-size:5px;line-height:6px;color:#555;color:#999;font-size:4px">Approved By</div>
<div class="a" style="left:592px;top:707px;width:93px;height:6px;border-bottom:1px dotted #c4c4c4"></div>
<div class="a" style="left:640px;top:707px;width:1px;height:6px;background:#d6d6d6"></div>
<div class="t" style="left:598px;top:707px;font-size:5px;line-height:6px;color:#555;color:#999;font-size:4px">Designed By</div>
<div class="a" style="left:592px;top:713px;width:93px;height:6px;border-bottom:1px dotted #c4c4c4"></div>
<div class="a" style="left:640px;top:713px;width:1px;height:6px;background:#d6d6d6"></div>
<div class="t" style="left:598px;top:713px;font-size:5px;line-height:6px;color:#555;color:#999;font-size:4px">Checked By</div>
<div class="a" style="left:592px;top:719px;width:93px;height:6px;border-bottom:1px dotted #c4c4c4"></div>
<div class="a" style="left:640px;top:719px;width:1px;height:6px;background:#d6d6d6"></div>
<div class="t" style="left:598px;top:719px;font-size:5px;line-height:6px;color:#555;color:#999;font-size:4px">Drawn By</div>
<div class="a" style="left:592px;top:725px;width:93px;height:6px;border-bottom:1px dotted #c4c4c4"></div>
<div class="a" style="left:640px;top:725px;width:1px;height:6px;background:#d6d6d6"></div>
<div class="t" style="left:598px;top:725px;font-size:5px;line-height:6px;color:#555;color:#999;font-size:4px">Sheet Number</div>
<div class="a" style="left:592px;top:731px;width:93px;height:6px;border-bottom:1px dotted #c4c4c4"></div>
<div class="a" style="left:640px;top:731px;width:1px;height:6px;background:#d6d6d6"></div>
<div class="t" style="left:598px;top:731px;font-size:5px;line-height:6px;color:#555;color:#999;font-size:4px">Sheet Name</div>
<div class="a" style="left:592px;top:737px;width:93px;height:6px;border-bottom:1px dotted #c4c4c4"></div>
<div class="a" style="left:640px;top:737px;width:1px;height:6px;background:#d6d6d6"></div>
<div class="t" style="left:598px;top:737px;font-size:5px;line-height:6px;color:#555;color:#999;font-size:4px">Sheet Issue Date</div>
<div class="a" style="left:592px;top:743px;width:93px;height:6px;border-bottom:1px dotted #c4c4c4"></div>
<div class="a" style="left:640px;top:743px;width:1px;height:6px;background:#d6d6d6"></div>
<div class="t" style="left:598px;top:743px;font-size:5px;line-height:6px;color:#555;color:#999;font-size:4px">Appears In Sheet List</div>
<div class="a" style="left:592px;top:749px;width:93px;height:6px;border-bottom:1px dotted #c4c4c4"></div>
<div class="a" style="left:640px;top:749px;width:1px;height:6px;background:#d6d6d6"></div>
<div class="t" style="left:598px;top:749px;font-size:5px;line-height:6px;color:#555;color:#999;font-size:4px">Revisions on Sheet</div>
<div class="a" style="left:685px;top:629px;width:4px;height:136px;background:#ececec;border-left:1px solid #ccc"></div>
<div class="a" style="left:690px;top:584px;width:2px;height:181px;background:#e6e6e6"></div>
<div class="a" style="left:692px;top:584px;width:266px;height:181px;background:#fff;border-top:1px solid #888;border-left:1px solid #888"></div>
<div class="a" style="left:713px;top:591px;width:216px;height:175px;border:1px solid #555;border-bottom:none"></div>
<div class="a" style="left:719px;top:597px;width:205px;height:169px;border:1px solid #444;border-bottom:none"></div>
<div class="t" style="left:722px;top:602px;font-size:5px;line-height:6px;color:#555;color:#222;font-size:6px;font-weight:bold;line-height:7px">Autodesk*Revit*</div>
<div class="t" style="left:722px;top:609px;font-size:5px;line-height:6px;color:#555;color:#222;font-size:6px;font-weight:bold;line-height:7px">Basic Sample Project</div>
<div class="a" style="left:722px;top:617px;width:115px;height:47px;background:linear-gradient(#f2f4f6 0%,#e4eaee 35%,#5f7f48 60%,#4a6638 80%,#6f7a66 100%)"></div>
<svg style="left:722px;top:617px;" width="115" height="47" viewBox="0 0 115 47"><path d="M0 8 Q6 2 12 10 V34 H0Z" fill="#516b45" opacity="0.8"/><path d="M6 34 V10 M20 32 V10 M33 30 V8" stroke="#bbb" stroke-width="0.6"/><path d="M30 20 L44 10 L88 10 L92 22 L70 26 L34 30Z" fill="#6a1616"/><path d="M34 22 L56 22 L58 40 L36 40Z" fill="#b9b6ae"/><path d="M58 22 L88 22 L88 36 L58 40Z" fill="#9a9890"/><path d="M60 26 L70 26 L70 36 L60 38Z" fill="#4a4e50"/><path d="M36 40 L100 30 L115 40 L40 47Z" fill="#9ea4a0" opacity="0.8"/><circle cx="104" cy="14" r="11" fill="#3d5a30"/><circle cx="98" cy="24" r="8" fill="#4f6e3a"/><ellipse cx="100" cy="40" rx="6" ry="3" fill="#d4cc60"/></svg>
<div class="a" style="left:722px;top:664px;width:80px;height:102px;background:#fff;border:1px solid #555;border-bottom:none"></div>
<svg style="left:722px;top:664px;" width="80" height="102" viewBox="0 0 80 102"><g fill="#333"><rect x="2" y="4" width="5" height="1.2"/><rect x="9" y="5" width="7" height="1.2"/><rect x="16" y="6" width="9" height="1.2"/><rect x="23" y="4" width="11" height="1.2"/><rect x="30" y="5" width="5" height="1.2"/><rect x="37" y="6" width="7" height="1.2"/><rect x="44" y="4" width="9" height="1.2"/><rect x="51" y="5" width="11" height="1.2"/><rect x="58" y="6" width="5" height="1.2"/><rect x="5" y="4" width="7" height="1.2"/><rect x="12" y="5" width="9" height="1.2"/><rect x="19" y="6" width="11" height="1.2"/><rect x="26" y="4" width="5" height="1.2"/><rect x="33" y="5" width="7" height="1.2"/><rect x="40" y="6" width="9" height="1.2"/><rect x="47" y="4" width="11" height="1.2"/><rect x="54" y="5" width="5" height="1.2"/><rect x="61" y="6" width="7" height="1.2"/><rect x="8" y="4" width="9" height="1.2"/><rect x="15" y="5" width="11" height="1.2"/><rect x="22" y="6" width="5" height="1.2"/><rect x="29" y="4" width="7" height="1.2"/><rect x="36" y="5" width="9" height="1.2"/><rect x="43" y="6" width="11" height="1.2"/><rect x="50" y="4" width="5" height="1.2"/><rect x="57" y="5" width="7" height="1.2"/><rect x="4" y="6" width="9" height="1.2"/><rect x="11" y="4" width="11" height="1.2"/><rect x="18" y="5" width="5" height="1.2"/><rect x="25" y="6" width="7" height="1.2"/></g><path d="M1 13 H79 M1 18 H79 M14 13 V102 M40 13 V102 M62 13 V102" stroke="#666" stroke-width="0.6"/><g fill="#222"><rect x="3" y="20" width="8" height="1.5"/><rect x="16" y="20" width="18" height="1.5"/><rect x="42" y="20" width="10" height="1.5"/><rect x="64" y="20" width="3" height="1.5"/><rect x="3" y="25" width="8" height="1.5"/><rect x="16" y="25" width="23" height="1.5"/><rect x="42" y="25" width="13" height="1.5"/><rect x="64" y="25" width="3" height="1.5"/><rect x="3" y="30" width="8" height="1.5"/><rect x="16" y="30" width="28" height="1.5"/><rect x="42" y="30" width="16" height="1.5"/><rect x="64" y="30" width="3" height="1.5"/><rect x="3" y="35" width="8" height="1.5"/><rect x="16" y="35" width="21" height="1.5"/><rect x="42" y="35" width="11" height="1.5"/><rect x="64" y="35" width="3" height="1.5"/><rect x="3" y="40" width="8" height="1.5"/><rect x="16" y="40" width="26" height="1.5"/><rect x="42" y="40" width="14" height="1.5"/><rect x="64" y="40" width="3" height="1.5"/><rect x="3" y="45" width="8" height="1.5"/><rect x="16" y="45" width="19" height="1.5"/><rect x="42" y="45" width="17" height="1.5"/><rect x="64" y="45" width="3" height="1.5"/><rect x="3" y="50" width="8" height="1.5"/><rect x="16" y="50" width="24" height="1.5"/><rect x="42" y="50" width="12" height="1.5"/><rect x="64" y="50" width="3" height="1.5"/><rect x="3" y="55" width="8" height="1.5"/><rect x="16" y="55" width="29" height="1.5"/><rect x="42" y="55" width="15" height="1.5"/><rect x="64" y="55" width="3" height="1.5"/><rect x="3" y="60" width="8" height="1.5"/><rect x="16" y="60" width="22" height="1.5"/><rect x="42" y="60" width="10" height="1.5"/><rect x="64" y="60" width="3" height="1.5"/><rect x="3" y="65" width="8" height="1.5"/><rect x="16" y="65" width="27" height="1.5"/><rect x="42" y="65" width="13" height="1.5"/><rect x="64" y="65" width="3" height="1.5"/><rect x="3" y="70" width="8" height="1.5"/><rect x="16" y="70" width="20" height="1.5"/><rect x="42" y="70" width="16" height="1.5"/><rect x="64" y="70" width="3" height="1.5"/><rect x="3" y="75" width="8" height="1.5"/><rect x="16" y="75" width="25" height="1.5"/><rect x="42" y="75" width="11" height="1.5"/><rect x="64" y="75" width="3" height="1.5"/><rect x="3" y="80" width="8" height="1.5"/><rect x="16" y="80" width="18" height="1.5"/><rect x="42" y="80" width="14" height="1.5"/><rect x="64" y="80" width="3" height="1.5"/><rect x="3" y="85" width="8" height="1.5"/><rect x="16" y="85" width="23" height="1.5"/><rect x="42" y="85" width="17" height="1.5"/><rect x="64" y="85" width="3" height="1.5"/><rect x="3" y="90" width="8" height="1.5"/><rect x="16" y="90" width="28" height="1.5"/><rect x="42" y="90" width="12" height="1.5"/><rect x="64" y="90" width="3" height="1.5"/><rect x="3" y="95" width="8" height="1.5"/><rect x="16" y="95" width="21" height="1.5"/><rect x="42" y="95" width="15" height="1.5"/><rect x="64" y="95" width="3" height="1.5"/></g></svg>
<div class="a" style="left:842px;top:602px;width:51px;height:28px;background:linear-gradient(90deg,#c8c8c0 0%,#e0e0d8 20%,#5a5a50 35%,#8a9a70 50%,#4a5a30 70%,#6a7a40 100%)"></div>
<svg style="left:842px;top:602px;" width="51" height="28" viewBox="0 0 51 28"><rect x="0" y="0" width="51" height="7" fill="#2a2a20" opacity="0.8"/><rect x="0" y="20" width="14" height="8" fill="#a86a40"/><path d="M26 0 L24 28 M33 0 V28" stroke="#222" stroke-width="2"/><rect x="9" y="12" width="4" height="6" fill="#222"/><rect x="38" y="12" width="13" height="16" fill="#3e4a28" opacity="0.8"/></svg>
<div class="a" style="left:842px;top:635px;width:51px;height:28px;background:linear-gradient(#e6e4da 0%,#f2f2ec 35%,#c0c4c0 60%,#9aa8b0 100%)"></div>
<svg style="left:842px;top:635px;" width="51" height="28" viewBox="0 0 51 28"><path d="M0 0 L8 4 V24 L0 28Z" fill="#2a2a2a"/><path d="M2 4 L7 6 V22 L2 24Z" fill="#9fc090"/><path d="M51 0 L43 4 V24 L51 28Z" fill="#2a2a2a"/><path d="M49 4 L44 6 V22 L49 24Z" fill="#c0d8b0"/><path d="M11 5 V20 M14 5 V20 M37 5 V20 M40 5 V20" stroke="#333" stroke-width="1"/><rect x="10" y="15" width="16" height="6" fill="#d08a20"/><rect x="20" y="19" width="10" height="7" fill="#c88018"/><rect x="30" y="8" width="2" height="8" fill="#e8d020"/><ellipse cx="27" cy="15" rx="3" ry="1.5" fill="#222"/></svg>
<div class="a" style="left:842px;top:670px;width:51px;height:96px;background:#fff"></div>
<div class="a" style="left:842px;top:670px;width:51px;height:26px;background:linear-gradient(#5a82b4 0%,#8aaccc 60%,#a8b8c0 100%)"></div>
<svg style="left:842px;top:670px;" width="51" height="26" viewBox="0 0 51 26"><path d="M20 14 L27 6 L35 14 V24 H20Z" fill="#4a3c30"/><path d="M18 15 L27 5 L37 15" fill="none" stroke="#8a3020" stroke-width="1.2"/><rect x="0" y="20" width="51" height="6" fill="#6a5a48"/><path d="M6 14 V22" stroke="#444" stroke-width="1.5"/><circle cx="46" cy="12" r="5" fill="#9aa870" opacity="0.7"/></svg>
<div class="a" style="left:898px;top:597px;width:26px;height:169px;border:1px solid #333;background:#fff;border-bottom:none"></div>
<div class="a" style="left:898px;top:597px;width:26px;height:15px;border-bottom:1px solid #333"></div>
<div class="t" style="left:901px;top:602px;font-size:5px;line-height:6px;color:#555;color:#335;font-size:3px">A AUTODESK</div>
<div class="a" style="left:898px;top:612px;width:26px;height:6px;border-bottom:1px solid #333"></div>
<div class="a" style="left:904px;top:614px;width:12px;height:1px;background:#333"></div>
<div class="a" style="left:903px;top:622px;width:4px;height:8px;background:repeating-linear-gradient(#222 0 1px,#fff 1px 2px)"></div>
<div class="a" style="left:915px;top:622px;width:4px;height:8px;background:repeating-linear-gradient(#222 0 1px,#fff 1px 2px)"></div>
<div class="a" style="left:903px;top:633px;width:4px;height:8px;background:repeating-linear-gradient(#222 0 1px,#fff 1px 2px)"></div>
<div class="a" style="left:915px;top:633px;width:4px;height:8px;background:repeating-linear-gradient(#222 0 1px,#fff 1px 2px)"></div>
<div class="a" style="left:898px;top:663px;width:26px;height:103px;background:repeating-linear-gradient(#d8d8d8 0 3px,#bcbcbc 3px 4px,#f4f4f4 4px 6px)"></div>
<div class="a" style="left:903px;top:663px;width:1px;height:103px;background:#555"></div>
<div class="a" style="left:918px;top:663px;width:1px;height:103px;background:#555"></div>
<div class="a" style="left:898px;top:663px;width:26px;height:2px;background:#555"></div>
<svg style="left:944px;top:587px;" width="14" height="5" viewBox="0 0 14 5"><path d="M0 3 H3 M5 1 H8 V4 H5Z M10 1 L13 4 M13 1 L10 4" stroke="#666" stroke-width="0.8" fill="none"/></svg>
<div class="a" style="left:939px;top:594px;width:11px;height:38px;background:#f4f4f4;border:1px solid #ccc;border-radius:2px"></div>
<div class="a" style="left:941px;top:600px;width:7px;height:7px;border:1px solid #bbb;border-radius:3px"></div>
<div class="a" style="left:941px;top:613px;width:5px;height:5px;background:#a8d090"></div>
<div class="a" style="left:952px;top:584px;width:6px;height:181px;background:#eeeeee"></div>
<div class="a" style="left:952px;top:664px;width:5px;height:6px;background:#ddd;border:1px solid #aaa"></div>
<div class="a" style="left:958px;top:584px;width:86px;height:181px;background:#fff;border-left:1px solid #888"></div>
<div class="a" style="left:958px;top:584px;width:86px;height:6px;background:#c4d2df"></div>
<div class="t" style="left:960px;top:584px;font-size:5px;line-height:6px;color:#555;color:#667;font-size:4px;letter-spacing:-0.15px">Project Browser - rac_basic_sample_project.rvt</div>
<div class="a" style="left:1040px;top:585px;width:3px;height:4px;background:#333;opacity:0.6"></div>
<div class="a" style="left:958px;top:590px;width:86px;height:2px;background:#777"></div>
<div class="t" style="left:973px;top:591px;font-size:5px;line-height:6px;color:#555;color:#444;font-size:4px;line-height:6px">Views (all)</div>
<div class="a" style="left:965px;top:593px;width:3px;height:3px;border:1px solid #bbb"></div>
<div class="t" style="left:974px;top:597px;font-size:5px;line-height:6px;color:#555;color:#444;font-size:4px;line-height:6px">Floor Plans</div>
<div class="a" style="left:966px;top:599px;width:3px;height:3px;border:1px solid #bbb"></div>
<div class="t" style="left:981px;top:603px;font-size:5px;line-height:6px;color:#555;color:#444;font-size:4px;line-height:6px">Level 1</div>
<div class="t" style="left:981px;top:609px;font-size:5px;line-height:6px;color:#555;color:#444;font-size:4px;line-height:6px">Level 2</div>
<div class="t" style="left:981px;top:615px;font-size:5px;line-height:6px;color:#555;color:#444;font-size:4px;line-height:6px">Site</div>
<div class="t" style="left:974px;top:621px;font-size:5px;line-height:6px;color:#555;color:#444;font-size:4px;line-height:6px">3D Views</div>
<div class="a" style="left:966px;top:623px;width:3px;height:3px;border:1px solid #bbb"></div>
<div class="t" style="left:981px;top:627px;font-size:5px;line-height:6px;color:#555;color:#444;font-size:4px;line-height:6px">Approach</div>
<div class="t" style="left:981px;top:633px;font-size:5px;line-height:6px;color:#555;color:#444;font-size:4px;line-height:6px">From Yard</div>
<div class="t" style="left:981px;top:639px;font-size:5px;line-height:6px;color:#555;color:#444;font-size:4px;line-height:6px">Kitchen</div>
<div class="t" style="left:981px;top:645px;font-size:5px;line-height:6px;color:#555;color:#444;font-size:4px;line-height:6px">Living Room</div>
<div class="t" style="left:981px;top:651px;font-size:5px;line-height:6px;color:#555;color:#444;font-size:4px;line-height:6px">Section Perspective</div>
<div class="t" style="left:981px;top:657px;font-size:5px;line-height:6px;color:#555;color:#444;font-size:4px;line-height:6px">Solar Analysis</div>
<div class="t" style="left:981px;top:663px;font-size:5px;line-height:6px;color:#555;color:#444;font-size:4px;line-height:6px">{3D}</div>
<div class="t" style="left:974px;top:669px;font-size:5px;line-height:6px;color:#555;color:#444;font-size:4px;line-height:6px">Elevations (Building Elevation)</div>
<div class="a" style="left:966px;top:671px;width:3px;height:3px;border:1px solid #bbb"></div>
<div class="t" style="left:981px;top:675px;font-size:5px;line-height:6px;color:#555;color:#444;font-size:4px;line-height:6px">East</div>
<div class="t" style="left:981px;top:681px;font-size:5px;line-height:6px;color:#555;color:#444;font-size:4px;line-height:6px">North</div>
<div class="t" style="left:981px;top:687px;font-size:5px;line-height:6px;color:#555;color:#444;font-size:4px;line-height:6px">South</div>
<div class="t" style="left:981px;top:693px;font-size:5px;line-height:6px;color:#555;color:#444;font-size:4px;line-height:6px">West</div>
<div class="t" style="left:974px;top:699px;font-size:5px;line-height:6px;color:#555;color:#444;font-size:4px;line-height:6px">Sections (Building Section)</div>
<div class="a" style="left:966px;top:701px;width:3px;height:3px;border:1px solid #bbb"></div>
<div class="t" style="left:981px;top:705px;font-size:5px;line-height:6px;color:#555;color:#444;font-size:4px;line-height:6px">Building Section</div>
<div class="t" style="left:981px;top:711px;font-size:5px;line-height:6px;color:#555;color:#444;font-size:4px;line-height:6px">Longitudinal Section</div>
<div class="t" style="left:981px;top:717px;font-size:5px;line-height:6px;color:#555;color:#444;font-size:4px;line-height:6px">Stair Section</div>
<div class="t" style="left:974px;top:723px;font-size:5px;line-height:6px;color:#555;color:#444;font-size:4px;line-height:6px">Sections (Wall Section)</div>
<div class="a" style="left:966px;top:725px;width:3px;height:3px;border:1px solid #bbb"></div>
<div class="t" style="left:981px;top:729px;font-size:5px;line-height:6px;color:#555;color:#444;font-size:4px;line-height:6px">Typ. Wall Section</div>
<div class="t" style="left:974px;top:735px;font-size:5px;line-height:6px;color:#555;color:#444;font-size:4px;line-height:6px">Detail Views (Detail)</div>
<div class="a" style="left:966px;top:737px;width:3px;height:3px;border:1px solid #bbb"></div>
<div class="t" style="left:981px;top:741px;font-size:5px;line-height:6px;color:#555;color:#444;font-size:4px;line-height:6px">Main Stair Detail</div>
<div class="t" style="left:981px;top:747px;font-size:5px;line-height:6px;color:#555;color:#444;font-size:4px;line-height:6px">Typical Floor Wall Connection</div>
<div class="t" style="left:981px;top:753px;font-size:5px;line-height:6px;color:#555;color:#444;font-size:4px;line-height:6px">Typical Foundation Detail</div>
<div class="a" style="left:969px;top:596px;width:1px;height:150px;border-left:1px dotted #ccc"></div>
<div class="a" style="left:1037px;top:592px;width:5px;height:165px;background:#f0f0f0"></div>
<div class="a" style="left:1037px;top:598px;width:5px;height:60px;background:#e0e0e0;border:1px solid #bbb"></div>
<div class="a" style="left:592px;top:756px;width:452px;height:9px;background:#e6e6e6;border-top:1px solid #bbb"></div>
<div class="a" style="left:1011px;top:757px;width:30px;height:7px;background:#ddd"></div>
<div class="a" style="left:1015px;top:700px;width:8px;height:341px;background:linear-gradient(90deg,rgba(0,0,0,0.45),rgba(0,0,0,0))"></div>
<div class="a" style="left:0px;top:693px;width:1015px;height:348px;background:linear-gradient(#c7ddf1,#b4d0ec 40%,#a9c8e8);border:1px solid #2a3440;border-left:none;border-radius:0 8px 0 0"></div>
<div class="a" style="left:0;top:694px;width:1008px;height:28px;overflow:hidden;background:#b8d7f4"><div class="a" style="left:-10px;top:-10px;width:295px;height:50px;background:#a3bad0;filter:blur(3px)"></div><div class="a" style="left:140px;top:-4px;width:140px;height:10px;background:#8a9db0;filter:blur(4px)"></div><div class="a" style="left:250px;top:14px;width:16px;height:8px;background:#7f93a8;filter:blur(3px)"></div><div class="a" style="left:20px;top:-4px;width:60px;height:8px;background:#8fa4b8;filter:blur(3px)"></div><div class="a" style="left:590px;top:2px;width:28px;height:24px;background:#a9c3dc;filter:blur(4px)"></div><div class="a" style="left:637px;top:4px;width:22px;height:20px;background:#abc5de;filter:blur(4px)"></div><div class="a" style="left:683px;top:4px;width:8px;height:22px;background:#abc5de;filter:blur(3px)"></div><div class="a" style="left:722px;top:0px;width:34px;height:30px;background:#8da2b8;filter:blur(4px)"></div><div class="a" style="left:764px;top:0px;width:38px;height:30px;background:#94aac0;filter:blur(4px)"></div><div class="a" style="left:770px;top:2px;width:14px;height:10px;background:#7c90a4;filter:blur(3px)"></div><div class="a" style="left:843px;top:-6px;width:52px;height:10px;background:#6f8090;filter:blur(3px)"></div><div class="a" style="left:843px;top:12px;width:52px;height:20px;background:#6d8aa4;filter:blur(4px)"></div><div class="a" style="left:905px;top:0px;width:30px;height:30px;background:#b0cae2;filter:blur(4px)"></div></div>
<div class="t" style="left:0px;top:700px;font-size:12px;letter-spacing:-0.3px;color:#111;line-height:15px">cing File List 20.15.03.04</div>
<div class="a" style="left:933px;top:694px;width:29px;height:20px;background:linear-gradient(#e4edf6,#cfdceb 45%,#a3b6ca 50%,#b3c6da);border:1px solid #3d4a5a;border-top:none;border-radius:0 0 0 5px"></div>
<svg style="left:940px;top:696px;" width="14" height="16" viewBox="0 0 14 16"><path d="M3.5 5.5 Q3.5 1.8 7 1.8 Q10.8 1.8 10.8 5 Q10.8 7.5 8.5 8.5 V10" fill="none" stroke="#333" stroke-width="4.2"/><rect x="5" y="10.5" width="4.5" height="4" fill="#333"/><path d="M3.5 5.5 Q3.5 1.8 7 1.8 Q10.8 1.8 10.8 5 Q10.8 7.5 8.3 8.5 V10" fill="none" stroke="#fff" stroke-width="2"/><rect x="6.2" y="11.6" width="2.2" height="2" fill="#fff"/></svg>
<div class="a" style="left:961px;top:694px;width:47px;height:20px;background:linear-gradient(#eeb0a4,#e08d7f 45%,#b8402a 50%,#d35a40 80%,#e0826a);border:1px solid #3d4a5a;border-top:none;border-radius:0 0 5px 0"></div>
<svg style="left:977px;top:697px;" width="16" height="13" viewBox="0 0 16 13"><path d="M3 2 L13 11 M13 2 L3 11" stroke="#3a3a48" stroke-width="5"/><path d="M3 2 L13 11 M13 2 L3 11" stroke="#fff" stroke-width="2.8"/></svg>
<div class="a" style="left:0px;top:722px;width:1008px;height:319px;background:#f0f0f0;border-top:1px solid #3a4a5a"></div>
<div class="a" style="left:0px;top:728px;width:821px;height:313px;background:#ababab;border-top:2px solid #111;border-right:1px solid #222"></div>
<div class="a" style="left:0px;top:730px;width:797px;height:33px;background:linear-gradient(#fff 0%,#fff 45%,#f5f5f5 50%,#f1f1f1 100%);border-bottom:2px solid #d5d5d5"></div>
<div class="a" style="left:32px;top:730px;width:1px;height:32px;background:#e4e4e4"></div>
<div class="a" style="left:82px;top:730px;width:1px;height:32px;background:#e4e4e4"></div>
<div class="a" style="left:272px;top:730px;width:1px;height:32px;background:#e4e4e4"></div>
<div class="a" style="left:347px;top:730px;width:1px;height:32px;background:#e4e4e4"></div>
<div class="a" style="left:422px;top:730px;width:1px;height:32px;background:#e4e4e4"></div>
<div class="a" style="left:497px;top:730px;width:1px;height:32px;background:#e4e4e4"></div>
<div class="a" style="left:572px;top:730px;width:1px;height:32px;background:#e4e4e4"></div>
<div class="a" style="left:647px;top:730px;width:1px;height:32px;background:#e4e4e4"></div>
<div class="a" style="left:747px;top:730px;width:1px;height:32px;background:#e4e4e4"></div>
<div class="t" style="left:38px;top:740px;color:#111;font-size:11px">Type</div>
<div class="t" style="left:89px;top:740px;color:#111;font-size:11px">Name</div>
<div class="t" style="left:279px;top:740px;color:#111;font-size:11px">Is Linked</div>
<div class="t" style="left:504px;top:734px;line-height:13px;color:#111;font-size:11px">Is<br>Hidden</div>
<div class="t" style="left:579px;top:740px;color:#111;font-size:11px">Workset</div>
<div class="t" style="left:654px;top:740px;color:#111;font-size:11px">Path</div>
<div class="t" style="left:755px;top:740px;color:#111;font-size:11px">Select</div>
<div class="t" style="left:355px;top:734px;line-height:13px;color:#111;font-size:11px">View<br>Specific</div>
<div class="t" style="left:429px;top:740px;color:#111;font-size:11px">Level</div>
<div class="a" style="left:0px;top:763px;width:797px;height:22px;background:#3399ff;border-bottom:1px solid #a0a0a0"></div>
<div class="a" style="left:32px;top:763px;width:1px;height:22px;background:#a0a0a0"></div>
<div class="a" style="left:82px;top:763px;width:1px;height:22px;background:#a0a0a0"></div>
<div class="a" style="left:272px;top:763px;width:1px;height:22px;background:#a0a0a0"></div>
<div class="a" style="left:347px;top:763px;width:1px;height:22px;background:#a0a0a0"></div>
<div class="a" style="left:422px;top:763px;width:1px;height:22px;background:#a0a0a0"></div>
<div class="a" style="left:497px;top:763px;width:1px;height:22px;background:#a0a0a0"></div>
<div class="a" style="left:572px;top:763px;width:1px;height:22px;background:#a0a0a0"></div>
<div class="a" style="left:647px;top:763px;width:1px;height:22px;background:#a0a0a0"></div>
<div class="a" style="left:747px;top:763px;width:1px;height:22px;background:#a0a0a0"></div>
<div class="t" style="left:-2px;top:767px;font-size:11px;color:#fff">00185</div>
<div class="t" style="left:36px;top:767px;font-size:11px;color:#fff">DWG</div>
<div class="t" style="left:86px;top:767px;font-size:11px;color:#fff">Linked CAD.dwg</div>
<div class="t" style="left:276px;top:767px;font-size:11px;color:#fff">Linked</div>
<div class="t" style="left:351px;top:767px;font-size:11px;color:#fff">True</div>
<div class="t" style="left:426px;top:767px;font-size:11px;color:#fff">NA</div>
<div class="t" style="left:501px;top:767px;font-size:11px;color:#fff">False</div>
<div class="t" style="left:576px;top:767px;font-size:11px;color:#fff">Workset1</div>
<div class="t" style="left:651px;top:767px;font-size:11px;color:#fff">New folder\Linke...</div>
<div class="a" style="left:766px;top:768px;width:12px;height:12px;background:linear-gradient(135deg,#dcdcdc,#fff);border:1px solid #8e8f8f"></div>
<svg style="left:767px;top:769px;" width="10" height="10" viewBox="0 0 10 10"><path d="M2 5 L4.5 8 L9 1" fill="none" stroke="#2a3a8a" stroke-width="1.8"/></svg>
<div class="a" style="left:0px;top:785px;width:797px;height:22px;background:#fff;border-bottom:1px solid #a0a0a0"></div>
<div class="a" style="left:32px;top:785px;width:1px;height:22px;background:#a0a0a0"></div>
<div class="a" style="left:82px;top:785px;width:1px;height:22px;background:#a0a0a0"></div>
<div class="a" style="left:272px;top:785px;width:1px;height:22px;background:#a0a0a0"></div>
<div class="a" style="left:347px;top:785px;width:1px;height:22px;background:#a0a0a0"></div>
<div class="a" style="left:422px;top:785px;width:1px;height:22px;background:#a0a0a0"></div>
<div class="a" style="left:497px;top:785px;width:1px;height:22px;background:#a0a0a0"></div>
<div class="a" style="left:572px;top:785px;width:1px;height:22px;background:#a0a0a0"></div>
<div class="a" style="left:647px;top:785px;width:1px;height:22px;background:#a0a0a0"></div>
<div class="a" style="left:747px;top:785px;width:1px;height:22px;background:#a0a0a0"></div>
<div class="t" style="left:-2px;top:789px;font-size:11px;color:#111">00191</div>
<div class="t" style="left:36px;top:789px;font-size:11px;color:#111">DWG</div>
<div class="t" style="left:86px;top:789px;font-size:11px;color:#111">Imported CAD.dwg</div>
<div class="t" style="left:276px;top:789px;font-size:11px;color:#111">Import</div>
<div class="t" style="left:351px;top:789px;font-size:11px;color:#111">False</div>
<div class="t" style="left:426px;top:789px;font-size:11px;color:#111">Level 1</div>
<div class="t" style="left:501px;top:789px;font-size:11px;color:#111">False</div>
<div class="t" style="left:576px;top:789px;font-size:11px;color:#111">Workset1</div>
<div class="t" style="left:651px;top:789px;font-size:11px;color:#111">NA</div>
<div class="a" style="left:766px;top:790px;width:12px;height:12px;background:linear-gradient(135deg,#dcdcdc,#fff);border:1px solid #8e8f8f"></div>
<div class="a" style="left:0px;top:807px;width:797px;height:22px;background:#3399ff;border-bottom:1px solid #a0a0a0"></div>
<div class="a" style="left:32px;top:807px;width:1px;height:22px;background:#a0a0a0"></div>
<div class="a" style="left:82px;top:807px;width:1px;height:22px;background:#a0a0a0"></div>
<div class="a" style="left:272px;top:807px;width:1px;height:22px;background:#a0a0a0"></div>
<div class="a" style="left:347px;top:807px;width:1px;height:22px;background:#a0a0a0"></div>
<div class="a" style="left:422px;top:807px;width:1px;height:22px;background:#a0a0a0"></div>
<div class="a" style="left:497px;top:807px;width:1px;height:22px;background:#a0a0a0"></div>
<div class="a" style="left:572px;top:807px;width:1px;height:22px;background:#a0a0a0"></div>
<div class="a" style="left:647px;top:807px;width:1px;height:22px;background:#a0a0a0"></div>
<div class="a" style="left:747px;top:807px;width:1px;height:22px;background:#a0a0a0"></div>
<div class="t" style="left:-2px;top:811px;font-size:11px;color:#fff">00194</div>
<div class="t" style="left:36px;top:811px;font-size:11px;color:#fff">Image</div>
<div class="t" style="left:86px;top:811px;font-size:11px;color:#fff">RevitInitialScreen.JPG</div>
<div class="t" style="left:276px;top:811px;font-size:11px;color:#fff">Import</div>
<div class="t" style="left:351px;top:811px;font-size:11px;color:#fff">True</div>
<div class="t" style="left:426px;top:811px;font-size:11px;color:#fff">NA</div>
<div class="t" style="left:501px;top:811px;font-size:11px;color:#fff">False</div>
<div class="t" style="left:576px;top:811px;font-size:11px;color:#fff">Workset1</div>
<div class="t" style="left:651px;top:811px;font-size:11px;color:#fff">NA</div>
<div class="a" style="left:766px;top:812px;width:12px;height:12px;background:linear-gradient(135deg,#dcdcdc,#fff);border:1px solid #8e8f8f"></div>
<svg style="left:767px;top:813px;" width="10" height="10" viewBox="0 0 10 10"><path d="M2 5 L4.5 8 L9 1" fill="none" stroke="#2a3a8a" stroke-width="1.8"/></svg>
<div class="a" style="left:0px;top:829px;width:797px;height:22px;background:#fff;border-bottom:1px solid #a0a0a0"></div>
<div class="a" style="left:32px;top:829px;width:1px;height:22px;background:#a0a0a0"></div>
<div class="a" style="left:82px;top:829px;width:1px;height:22px;background:#a0a0a0"></div>
<div class="a" style="left:272px;top:829px;width:1px;height:22px;background:#a0a0a0"></div>
<div class="a" style="left:347px;top:829px;width:1px;height:22px;background:#a0a0a0"></div>
<div class="a" style="left:422px;top:829px;width:1px;height:22px;background:#a0a0a0"></div>
<div class="a" style="left:497px;top:829px;width:1px;height:22px;background:#a0a0a0"></div>
<div class="a" style="left:572px;top:829px;width:1px;height:22px;background:#a0a0a0"></div>
<div class="a" style="left:647px;top:829px;width:1px;height:22px;background:#a0a0a0"></div>
<div class="a" style="left:747px;top:829px;width:1px;height:22px;background:#a0a0a0"></div>
<div class="t" style="left:-2px;top:833px;font-size:11px;color:#111">00195</div>
<div class="t" style="left:36px;top:833px;font-size:11px;color:#111">Revit</div>
<div class="t" style="left:86px;top:833px;font-size:11px;color:#111">Project2012.rvt</div>
<div class="t" style="left:276px;top:833px;font-size:11px;color:#111">Linked</div>
<div class="t" style="left:351px;top:833px;font-size:11px;color:#111">False</div>
<div class="t" style="left:426px;top:833px;font-size:11px;color:#111">NA</div>
<div class="t" style="left:501px;top:833px;font-size:11px;color:#111">False</div>
<div class="t" style="left:576px;top:833px;font-size:11px;color:#111">Workset1</div>
<div class="t" style="left:651px;top:833px;font-size:11px;color:#111">False</div>
<div class="a" style="left:766px;top:834px;width:12px;height:12px;background:linear-gradient(135deg,#dcdcdc,#fff);border:1px solid #8e8f8f"></div>
<div class="t" style="left:829px;top:724px;color:#111;font-size:11px">Total selected:</div>
<div class="t" style="left:985px;top:724px;color:#111;font-size:11px">2</div>
<div class="a" style="left:828px;top:741px;width:166px;height:21px;background:linear-gradient(#f2f2f2 0%,#ebebeb 50%,#dddddd 51%,#cfcfcf 100%);border:1px solid #707070;border-radius:3px;"></div>
<div class="t" style="left:831px;top:745px;width:160px;text-align:center;color:#111;font-size:11px">Select Selected</div>
<div class="a" style="left:828px;top:770px;width:166px;height:21px;background:linear-gradient(#f2f2f2 0%,#ebebeb 50%,#dddddd 51%,#cfcfcf 100%);border:1px solid #707070;border-radius:3px;"></div>
<div class="t" style="left:831px;top:774px;width:160px;text-align:center;color:#111;font-size:11px">Select All</div>
<div class="a" style="left:828px;top:799px;width:166px;height:21px;background:linear-gradient(#f2f2f2 0%,#ebebeb 50%,#dddddd 51%,#cfcfcf 100%);border:1px solid #707070;border-radius:3px;"></div>
<div class="t" style="left:831px;top:803px;width:160px;text-align:center;color:#111;font-size:11px">Select None</div>
<div class="a" style="left:828px;top:828px;width:166px;height:21px;background:linear-gradient(#f2f2f2 0%,#ebebeb 50%,#dddddd 51%,#cfcfcf 100%);border:1px solid #707070;border-radius:3px;"></div>
<div class="t" style="left:831px;top:832px;width:160px;text-align:center;color:#111;font-size:11px">About</div>
<div class="a" style="left:828px;top:857px;width:166px;height:21px;background:linear-gradient(#f2f2f2 0%,#ebebeb 50%,#dddddd 51%,#cfcfcf 100%);border:1px solid #707070;border-radius:3px;"></div>
<div class="t" style="left:831px;top:861px;width:160px;text-align:center;color:#111;font-size:11px">Delete Selected</div>
<div class="a" style="left:828px;top:886px;width:166px;height:21px;background:linear-gradient(#f2f2f2 0%,#ebebeb 50%,#dddddd 51%,#cfcfcf 100%);border:1px solid #3c7fb1;border-radius:3px;box-shadow:inset 0 0 0 1px #48d0f8"></div>
<div class="t" style="left:831px;top:890px;width:160px;text-align:center;color:#111;font-size:11px">Go to View</div>
<div class="a" style="left:828px;top:915px;width:166px;height:21px;background:linear-gradient(#f2f2f2 0%,#ebebeb 50%,#dddddd 51%,#cfcfcf 100%);border:1px solid #707070;border-radius:3px;"></div>
<div class="t" style="left:831px;top:919px;width:160px;text-align:center;color:#111;font-size:11px">Export to CSV</div>
<div class="a" style="left:828px;top:967px;width:166px;height:21px;background:linear-gradient(#f2f2f2 0%,#ebebeb 50%,#dddddd 51%,#cfcfcf 100%);border:1px solid #707070;border-radius:3px;"></div>
<div class="t" style="left:831px;top:971px;width:160px;text-align:center;color:#111;font-size:11px">Close</div>
<div class="t" style="left:829px;top:1002px;color:#111;font-size:11px">Total families:</div>
<div class="t" style="left:985px;top:1002px;color:#111;font-size:11px">4</div>
<div class="a" style="left:1008px;top:722px;width:7px;height:319px;background:linear-gradient(90deg,#b4d0ec,#a9c8e8)"></div></body></html>
